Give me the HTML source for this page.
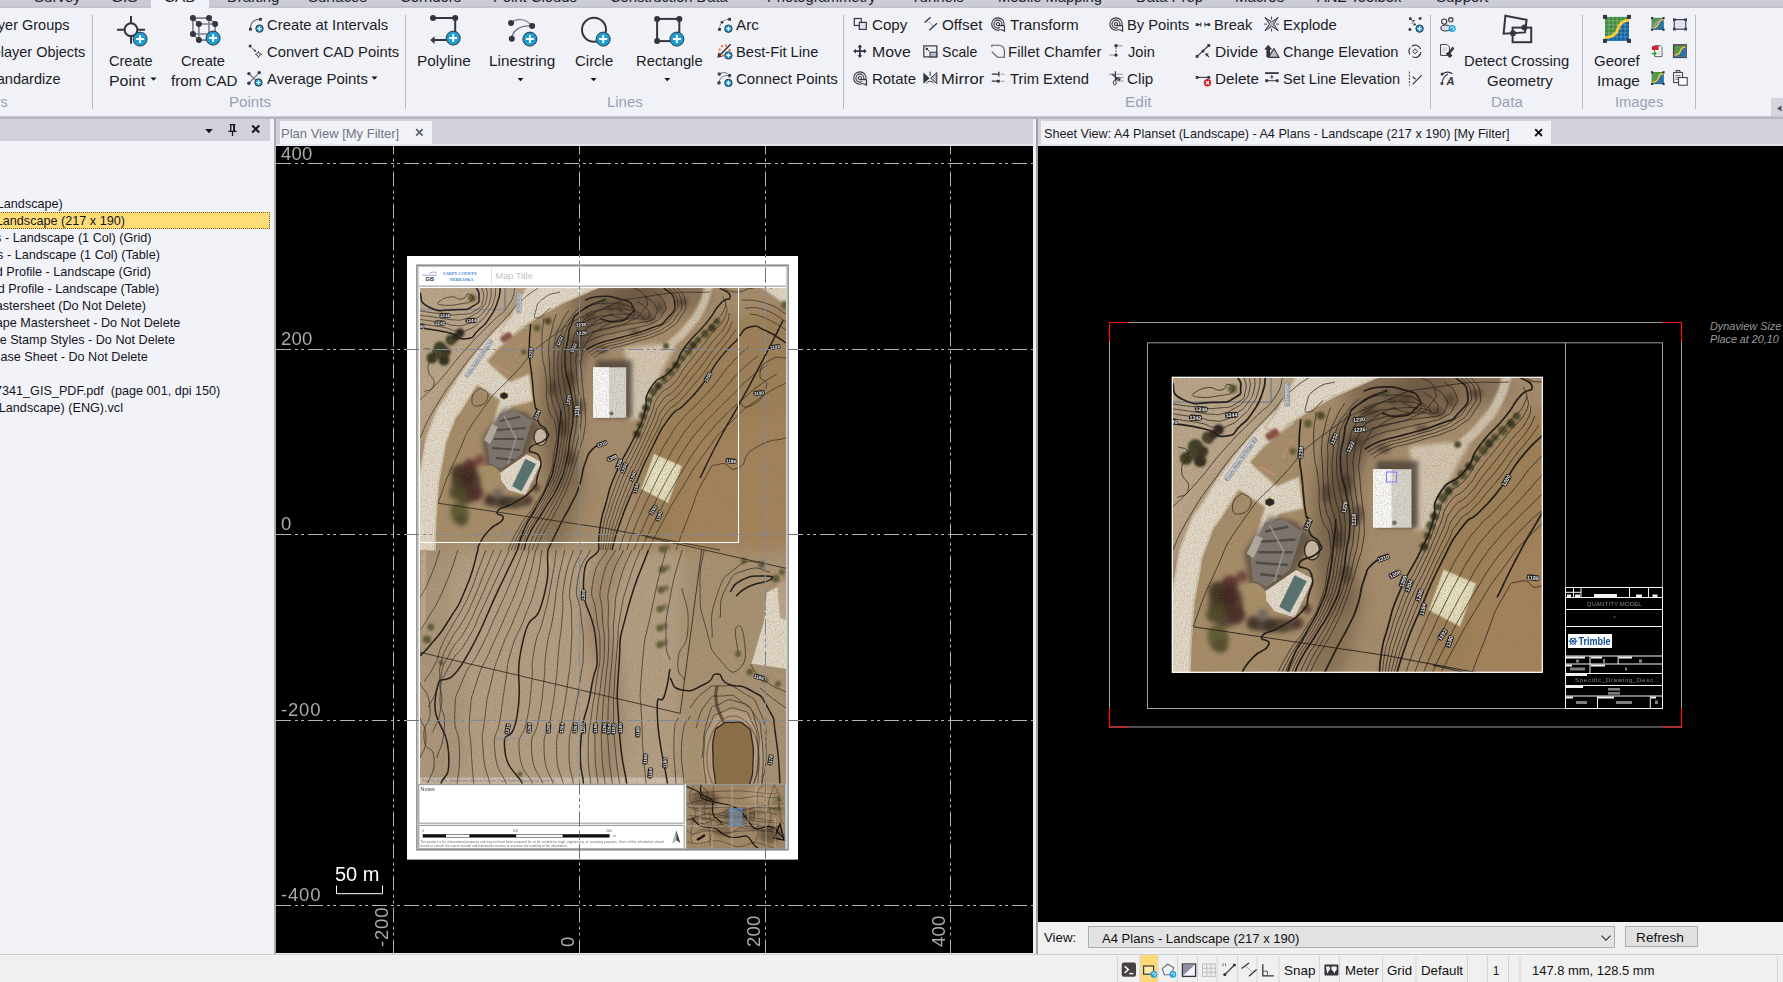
<!DOCTYPE html>
<html><head><meta charset="utf-8"><title>TBC</title>
<style>
html,body{margin:0;padding:0;}
body{width:1783px;height:982px;overflow:hidden;position:relative;background:#f0f0f0;font-family:"Liberation Sans",sans-serif;}
.a{position:absolute;}
.t{position:absolute;white-space:pre;font-family:"Liberation Sans",sans-serif;}
svg{position:absolute;overflow:visible;}
.sep{position:absolute;top:15px;width:1px;height:94px;background:#b9bac4;}
.sd{position:absolute;top:956px;width:1px;height:26px;background:#dcdcdc;}
</style></head><body>
<!-- top tab strip -->
<div class="a" style="left:0;top:0;width:1783px;height:8px;background:#cbccd5;"></div>
<div class="a" style="left:0;top:6px;width:1783px;height:2px;background:#c2c3cc;"></div>
<div class="a" style="left:151px;top:0;width:58px;height:8px;background:#f1f2f8;"></div>
<!-- ribbon -->
<div class="a" style="left:0;top:8px;width:1783px;height:108px;background:#f1f2f8;"></div>
<div class="a" style="left:0;top:116px;width:1783px;height:1px;background:#c9cad2;"></div>
<div class="a" style="left:0;top:117px;width:1783px;height:2px;background:#b4b5bd;"></div>
<div class="sep" style="left:92px;"></div>
<div class="sep" style="left:405px;"></div>
<div class="sep" style="left:843px;"></div>
<div class="sep" style="left:1430px;"></div>
<div class="sep" style="left:1582px;"></div>
<div class="sep" style="left:1695px;"></div>
<div class="a" style="left:1771px;top:98px;width:12px;height:18px;background:#d3d4dc;"></div>
<!-- dock strip -->
<div class="a" style="left:0;top:119px;width:1783px;height:27px;background:#d0d1db;"></div>
<!-- left panel -->
<div class="a" style="left:0;top:141px;width:274px;height:813px;background:#f2f3f9;"></div>
<div class="a" style="left:270px;top:119px;width:4px;height:835px;background:#f2f3f9;"></div>
<div class="a" style="left:274px;top:119px;width:2px;height:835px;background:#a9aab2;"></div>
<div class="a" style="left:0;top:954px;width:1783px;height:1px;background:#cfcfd2;"></div>
<!-- highlighted row -->
<div class="a" style="left:-2px;top:212px;width:270px;height:15px;background:#ffdc78;border:1px dotted #6b5a20;"></div>
<!-- plan view -->
<div class="a" style="left:280px;top:121px;width:152px;height:23.5px;background:#f2f3f9;"></div>
<div class="a" style="left:276px;top:144px;width:757px;height:2px;background:#e3e4ec;"></div>
<div class="a" style="left:276px;top:146px;width:757.5px;height:807px;background:#000;"></div>
<!-- splitter -->
<div class="a" style="left:1033px;top:119px;width:3px;height:835px;background:#eeeff5;"></div>
<div class="a" style="left:1036px;top:119px;width:2px;height:835px;background:#9fa0a8;"></div>
<!-- sheet view -->
<div class="a" style="left:1041px;top:121px;width:510px;height:23.5px;background:#f2f3f9;"></div>
<div class="a" style="left:1038px;top:144px;width:745px;height:2px;background:#e3e4ec;"></div>
<div class="a" style="left:1038px;top:146px;width:745px;height:776px;background:#000;"></div>
<div class="a" style="left:1038px;top:922px;width:745px;height:32px;background:#f0f0f0;"></div>
<div class="a" style="left:1088px;top:926px;width:527px;height:22px;background:#e3e3e3;border:1px solid #adadad;box-sizing:border-box;"></div>
<div class="a" style="left:1625px;top:926px;width:73px;height:21px;background:#e1e1e1;border:1px solid #adadad;box-sizing:border-box;"></div>
<!-- status bar -->
<div class="a" style="left:0;top:955px;width:1783px;height:27px;background:#f0f0f0;"></div>
<div class="a" style="left:1140px;top:955px;width:18px;height:27px;background:#ffd978;"></div>
<span class="t" style="left:-18.3px;top:15.8px;font-size:14.5px;line-height:19px;color:#1c1c26;transform-origin:0 0;transform:scaleX(1.0000);">Layer Groups</span>
<span class="t" style="left:-17.8px;top:42.7px;font-size:14.5px;line-height:19px;color:#1c1c26;transform-origin:0 0;transform:scaleX(1.0000);">Relayer Objects</span>
<span class="t" style="left:-16.9px;top:69.6px;font-size:14.5px;line-height:19px;color:#1c1c26;transform-origin:0 0;transform:scaleX(1.0000);">Standardize</span>
<span class="t" style="left:-34.6px;top:93.2px;font-size:14.5px;line-height:19px;color:#9a9fb4;transform-origin:0 0;transform:scaleX(0.9800);">Layers</span>
<span class="t" style="left:109.4px;top:51.8px;font-size:14.5px;line-height:19px;color:#1c1c26;transform-origin:0 0;transform:scaleX(1.0042);">Create</span>
<span class="t" style="left:109.3px;top:71.6px;font-size:14.5px;line-height:19px;color:#1c1c26;transform-origin:0 0;transform:scaleX(1.0968);">Point</span>
<span class="t" style="left:181.3px;top:51.8px;font-size:14.5px;line-height:19px;color:#1c1c26;transform-origin:0 0;transform:scaleX(1.0113);">Create</span>
<span class="t" style="left:170.7px;top:71.6px;font-size:14.5px;line-height:19px;color:#1c1c26;transform-origin:0 0;transform:scaleX(1.0444);">from CAD</span>
<span class="t" style="left:266.5px;top:15.8px;font-size:14.5px;line-height:19px;color:#1c1c26;transform-origin:0 0;transform:scaleX(1.0225);">Create at Intervals</span>
<span class="t" style="left:266.5px;top:42.7px;font-size:14.5px;line-height:19px;color:#1c1c26;transform-origin:0 0;transform:scaleX(1.0184);">Convert CAD Points</span>
<span class="t" style="left:266.5px;top:69.6px;font-size:14.5px;line-height:19px;color:#1c1c26;transform-origin:0 0;transform:scaleX(1.0293);">Average Points</span>
<span class="t" style="left:228.8px;top:93.2px;font-size:14.5px;line-height:19px;color:#9a9fb4;transform-origin:0 0;transform:scaleX(1.0438);">Points</span>
<span class="t" style="left:417.2px;top:51.8px;font-size:14.5px;line-height:19px;color:#1c1c26;transform-origin:0 0;transform:scaleX(1.0613);">Polyline</span>
<span class="t" style="left:488.6px;top:51.8px;font-size:14.5px;line-height:19px;color:#1c1c26;transform-origin:0 0;transform:scaleX(1.0543);">Linestring</span>
<span class="t" style="left:575.0px;top:51.8px;font-size:14.5px;line-height:19px;color:#1c1c26;transform-origin:0 0;transform:scaleX(1.0321);">Circle</span>
<span class="t" style="left:635.5px;top:51.8px;font-size:14.5px;line-height:19px;color:#1c1c26;transform-origin:0 0;transform:scaleX(1.0205);">Rectangle</span>
<span class="t" style="left:735.5px;top:15.8px;font-size:14.5px;line-height:19px;color:#1c1c26;transform-origin:0 0;transform:scaleX(1.0518);">Arc</span>
<span class="t" style="left:735.5px;top:42.7px;font-size:14.5px;line-height:19px;color:#1c1c26;transform-origin:0 0;transform:scaleX(1.0113);">Best-Fit Line</span>
<span class="t" style="left:735.5px;top:69.6px;font-size:14.5px;line-height:19px;color:#1c1c26;transform-origin:0 0;transform:scaleX(1.0358);">Connect Points</span>
<span class="t" style="left:607.3px;top:93.2px;font-size:14.5px;line-height:19px;color:#9a9fb4;transform-origin:0 0;transform:scaleX(1.0282);">Lines</span>
<span class="t" style="left:871.6px;top:15.8px;font-size:14.5px;line-height:19px;color:#1c1c26;transform-origin:0 0;transform:scaleX(1.0448);">Copy</span>
<span class="t" style="left:871.6px;top:42.7px;font-size:14.5px;line-height:19px;color:#1c1c26;transform-origin:0 0;transform:scaleX(1.0927);">Move</span>
<span class="t" style="left:871.6px;top:69.6px;font-size:14.5px;line-height:19px;color:#1c1c26;transform-origin:0 0;transform:scaleX(1.0310);">Rotate</span>
<span class="t" style="left:941.6px;top:15.8px;font-size:14.5px;line-height:19px;color:#1c1c26;transform-origin:0 0;transform:scaleX(1.0511);">Offset</span>
<span class="t" style="left:941.7px;top:42.7px;font-size:14.5px;line-height:19px;color:#1c1c26;transform-origin:0 0;transform:scaleX(0.9718);">Scale</span>
<span class="t" style="left:940.5px;top:69.6px;font-size:14.5px;line-height:19px;color:#1c1c26;transform-origin:0 0;transform:scaleX(1.1420);">Mirror</span>
<span class="t" style="left:1009.6px;top:15.8px;font-size:14.5px;line-height:19px;color:#1c1c26;transform-origin:0 0;transform:scaleX(1.0465);">Transform</span>
<span class="t" style="left:1008.2px;top:42.7px;font-size:14.5px;line-height:19px;color:#1c1c26;transform-origin:0 0;transform:scaleX(1.0356);">Fillet Chamfer</span>
<span class="t" style="left:1009.6px;top:69.6px;font-size:14.5px;line-height:19px;color:#1c1c26;transform-origin:0 0;transform:scaleX(1.0181);">Trim Extend</span>
<span class="t" style="left:1127.4px;top:15.8px;font-size:14.5px;line-height:19px;color:#1c1c26;transform-origin:0 0;transform:scaleX(1.0158);">By Points</span>
<span class="t" style="left:1127.5px;top:42.7px;font-size:14.5px;line-height:19px;color:#1c1c26;transform-origin:0 0;transform:scaleX(1.0078);">Join</span>
<span class="t" style="left:1127.4px;top:69.6px;font-size:14.5px;line-height:19px;color:#1c1c26;transform-origin:0 0;transform:scaleX(1.0520);">Clip</span>
<span class="t" style="left:1213.5px;top:15.8px;font-size:14.5px;line-height:19px;color:#1c1c26;transform-origin:0 0;transform:scaleX(1.0115);">Break</span>
<span class="t" style="left:1214.8px;top:42.7px;font-size:14.5px;line-height:19px;color:#1c1c26;transform-origin:0 0;transform:scaleX(1.0698);">Divide</span>
<span class="t" style="left:1214.8px;top:69.6px;font-size:14.5px;line-height:19px;color:#1c1c26;transform-origin:0 0;transform:scaleX(1.0516);">Delete</span>
<span class="t" style="left:1283.1px;top:15.8px;font-size:14.5px;line-height:19px;color:#1c1c26;transform-origin:0 0;transform:scaleX(1.0275);">Explode</span>
<span class="t" style="left:1283.1px;top:42.7px;font-size:14.5px;line-height:19px;color:#1c1c26;transform-origin:0 0;transform:scaleX(1.0082);">Change Elevation</span>
<span class="t" style="left:1283.2px;top:69.6px;font-size:14.5px;line-height:19px;color:#1c1c26;transform-origin:0 0;transform:scaleX(1.0018);">Set Line Elevation</span>
<span class="t" style="left:1124.7px;top:93.2px;font-size:14.5px;line-height:19px;color:#9a9fb4;transform-origin:0 0;transform:scaleX(1.0645);">Edit</span>
<span class="t" style="left:1464.4px;top:51.8px;font-size:14.5px;line-height:19px;color:#1c1c26;transform-origin:0 0;transform:scaleX(1.0202);">Detect Crossing</span>
<span class="t" style="left:1486.6px;top:71.6px;font-size:14.5px;line-height:19px;color:#1c1c26;transform-origin:0 0;transform:scaleX(1.0345);">Geometry</span>
<span class="t" style="left:1490.9px;top:93.2px;font-size:14.5px;line-height:19px;color:#9a9fb4;transform-origin:0 0;transform:scaleX(1.0367);">Data</span>
<span class="t" style="left:1594.4px;top:51.8px;font-size:14.5px;line-height:19px;color:#1c1c26;transform-origin:0 0;transform:scaleX(1.0320);">Georef</span>
<span class="t" style="left:1597.1px;top:71.6px;font-size:14.5px;line-height:19px;color:#1c1c26;transform-origin:0 0;transform:scaleX(1.0645);">Image</span>
<span class="t" style="left:1614.8px;top:93.2px;font-size:14.5px;line-height:19px;color:#9a9fb4;transform-origin:0 0;transform:scaleX(1.0162);">Images</span>
<span class="t" style="left:33.5px;top:-11.9px;font-size:14.5px;line-height:19px;color:#23232d;transform-origin:0 0;transform:scaleX(1.0366);">Survey</span>
<span class="t" style="left:110.5px;top:-11.9px;font-size:14.5px;line-height:19px;color:#23232d;transform-origin:0 0;transform:scaleX(1.0682);">GIS</span>
<span class="t" style="left:163.7px;top:-11.9px;font-size:14.5px;line-height:19px;color:#23232d;transform-origin:0 0;transform:scaleX(1.0550);">CAD</span>
<span class="t" style="left:226.6px;top:-11.9px;font-size:14.5px;line-height:19px;color:#23232d;transform-origin:0 0;transform:scaleX(1.0324);">Drafting</span>
<span class="t" style="left:308.4px;top:-11.9px;font-size:14.5px;line-height:19px;color:#23232d;transform-origin:0 0;transform:scaleX(1.0287);">Surfaces</span>
<span class="t" style="left:400.2px;top:-11.9px;font-size:14.5px;line-height:19px;color:#23232d;transform-origin:0 0;transform:scaleX(1.0275);">Corridors</span>
<span class="t" style="left:492.9px;top:-11.9px;font-size:14.5px;line-height:19px;color:#23232d;transform-origin:0 0;transform:scaleX(1.0198);">Point Clouds</span>
<span class="t" style="left:610.0px;top:-11.9px;font-size:14.5px;line-height:19px;color:#23232d;transform-origin:0 0;transform:scaleX(1.0139);">Construction Data</span>
<span class="t" style="left:766.5px;top:-11.9px;font-size:14.5px;line-height:19px;color:#23232d;transform-origin:0 0;transform:scaleX(1.0151);">Photogrammetry</span>
<span class="t" style="left:910.5px;top:-11.9px;font-size:14.5px;line-height:19px;color:#23232d;transform-origin:0 0;transform:scaleX(1.0323);">Tunnels</span>
<span class="t" style="left:997.9px;top:-11.9px;font-size:14.5px;line-height:19px;color:#23232d;transform-origin:0 0;transform:scaleX(1.0158);">Mobile Mapping</span>
<span class="t" style="left:1136.4px;top:-11.9px;font-size:14.5px;line-height:19px;color:#23232d;transform-origin:0 0;transform:scaleX(1.0250);">Data Prep</span>
<span class="t" style="left:1235.3px;top:-11.9px;font-size:14.5px;line-height:19px;color:#23232d;transform-origin:0 0;transform:scaleX(1.0347);">Macros</span>
<span class="t" style="left:1316.7px;top:-11.9px;font-size:14.5px;line-height:19px;color:#23232d;transform-origin:0 0;transform:scaleX(1.0197);">ANZ Toolbox</span>
<span class="t" style="left:1435.6px;top:-11.9px;font-size:14.5px;line-height:19px;color:#23232d;transform-origin:0 0;transform:scaleX(1.0324);">Support</span>
<span class="t" style="left:-53.2px;top:194.8px;font-size:13.5px;line-height:18px;color:#14141c;transform-origin:0 0;transform:scaleX(0.9350);">Planset (Landscape)</span>
<span class="t" style="left:-46.9px;top:211.8px;font-size:13.5px;line-height:18px;color:#14141c;transform-origin:0 0;transform:scaleX(0.9350);">Plans - Landscape (217 x 190)</span>
<span class="t" style="left:-46.7px;top:228.8px;font-size:13.5px;line-height:18px;color:#14141c;transform-origin:0 0;transform:scaleX(0.9350);">Sections - Landscape (1 Col) (Grid)</span>
<span class="t" style="left:-44.9px;top:245.8px;font-size:13.5px;line-height:18px;color:#14141c;transform-origin:0 0;transform:scaleX(0.9350);">Sections - Landscape (1 Col) (Table)</span>
<span class="t" style="left:-46.9px;top:262.8px;font-size:13.5px;line-height:18px;color:#14141c;transform-origin:0 0;transform:scaleX(0.9350);">Plan and Profile - Landscape (Grid)</span>
<span class="t" style="left:-45.2px;top:279.8px;font-size:13.5px;line-height:18px;color:#14141c;transform-origin:0 0;transform:scaleX(0.9350);">Plan and Profile - Landscape (Table)</span>
<span class="t" style="left:-79.9px;top:296.8px;font-size:13.5px;line-height:18px;color:#14141c;transform-origin:0 0;transform:scaleX(0.9350);">Landscape Mastersheet (Do Not Delete)</span>
<span class="t" style="left:-45.3px;top:313.8px;font-size:13.5px;line-height:18px;color:#14141c;transform-origin:0 0;transform:scaleX(0.9350);">Landscape Mastersheet - Do Not Delete</span>
<span class="t" style="left:-20.0px;top:330.8px;font-size:13.5px;line-height:18px;color:#14141c;transform-origin:0 0;transform:scaleX(0.9350);">Date Stamp Styles - Do Not Delete</span>
<span class="t" style="left:-7.8px;top:347.8px;font-size:13.5px;line-height:18px;color:#14141c;transform-origin:0 0;transform:scaleX(0.9350);">Base Sheet - Do Not Delete</span>
<span class="t" style="left:-12.3px;top:381.8px;font-size:13.5px;line-height:18px;color:#14141c;transform-origin:0 0;transform:scaleX(0.9350);">17341_GIS_PDF.pdf  (page 001, dpi 150)</span>
<span class="t" style="left:-51.5px;top:398.8px;font-size:13.5px;line-height:18px;color:#14141c;transform-origin:0 0;transform:scaleX(0.9350);">Planset (Landscape) (ENG).vcl</span>
<span class="t" style="left:281.2px;top:124.8px;font-size:13px;line-height:17px;color:#707585;transform-origin:0 0;transform:scaleX(0.9999);">Plan View [My Filter]</span>
<span class="t" style="left:1043.6px;top:124.8px;font-size:13px;line-height:17px;color:#1a1a24;transform-origin:0 0;transform:scaleX(0.9721);">Sheet View: A4 Planset (Landscape) - A4 Plans - Landscape (217 x 190) [My Filter]</span>
<span class="t" style="left:1043.9px;top:928.9px;font-size:13.5px;line-height:18px;color:#111;transform-origin:0 0;transform:scaleX(0.9845);">View:</span>
<span class="t" style="left:1102.2px;top:929.5px;font-size:13.5px;line-height:18px;color:#111;transform-origin:0 0;transform:scaleX(0.9673);">A4 Plans - Landscape (217 x 190)</span>
<span class="t" style="left:1636.4px;top:928.5px;font-size:13.5px;line-height:18px;color:#111;transform-origin:0 0;transform:scaleX(1.0135);">Refresh</span>
<span class="t" style="left:1284.1px;top:961.5px;font-size:13.5px;line-height:18px;color:#111;transform-origin:0 0;transform:scaleX(0.9952);">Snap</span>
<span class="t" style="left:1344.7px;top:961.5px;font-size:13.5px;line-height:18px;color:#111;transform-origin:0 0;transform:scaleX(0.9812);">Meter</span>
<span class="t" style="left:1387.1px;top:961.5px;font-size:13.5px;line-height:18px;color:#111;transform-origin:0 0;transform:scaleX(0.9868);">Grid</span>
<span class="t" style="left:1421.1px;top:961.5px;font-size:13.5px;line-height:18px;color:#111;transform-origin:0 0;transform:scaleX(0.9833);">Default</span>
<span class="t" style="left:1493.3px;top:961.5px;font-size:13.5px;line-height:18px;color:#111;transform-origin:0 0;transform:scaleX(0.8302);">1</span>
<span class="t" style="left:1532.2px;top:961.5px;font-size:13.5px;line-height:18px;color:#111;transform-origin:0 0;transform:scaleX(0.9599);">147.8 mm, 128.5 mm</span>
<span class="t" style="left:1709.8px;top:319.5px;font-size:10px;line-height:13px;color:#9a9a9a;transform-origin:0 0;transform:scaleX(1.0876);font-style:italic;">Dynaview Size =</span>
<span class="t" style="left:1709.8px;top:332.5px;font-size:10px;line-height:13px;color:#9a9a9a;transform-origin:0 0;transform:scaleX(1.0743);font-style:italic;">Place at 20,10</span><svg style="left:0;top:0" width="1783" height="120" viewBox="0 0 1783 120">
<defs>
<g id="bB"><circle r="7" fill="#1b9ed6"/><path d="M-4 0H4M0 -4V4" stroke="#fff" stroke-width="2" fill="none"/></g>
<g id="bS"><circle r="3.7" fill="#1b9ed6"/><path d="M-2.1 0H2.1M0 -2.1V2.1" stroke="#fff" stroke-width="1.2" fill="none"/></g>
<path id="dd" d="M-3 -1.5H3L0 1.8Z" fill="#111"/>
<g id="rot"><circle r="6.2" fill="none" stroke="#35353f" stroke-width="1.1"/><circle r="4" fill="none" stroke="#35353f" stroke-width="1.1"/><circle r="1.6" fill="none" stroke="#35353f" stroke-width="1.1"/><path d="M1 1.5H7V7.3H3.6" fill="#f1f2f8" stroke="none"/><path d="M0.5 1.6H6.6M6.6 1.6V7L3.2 5.4" fill="none" stroke="#35353f" stroke-width="1.2"/></g>
<g id="geo"><rect x="-12" y="-12" width="24" height="24" fill="#0f62a1"/><path d="M-12 -12H12V-9C4 -8 2 -4 1 0C0 5 -5 8 -12 9Z" fill="#418c3c"/><path d="M-12 9C-5 8 0 5 1 0C2 -4 4 -8 12 -9" fill="none" stroke="#f5c21b" stroke-width="3"/><path d="M-8 -12V12M-4 -12V12M0 -12V12M4 -12V12M8 -12V12M-12 -8H12M-12 -4H12M-12 0H12M-12 4H12M-12 8H12" stroke="#fff" stroke-opacity=".35" stroke-width=".7"/></g>
</defs>
<g fill="none" stroke="#35353f">
<!-- Create Point -->
<circle cx="131" cy="29.7" r="6.4" stroke-width="2"/><path d="M131 16V23.3M131 36.1V43.8M117 29.7H124.6M137.4 29.7H145" stroke-width="2"/>
<use href="#bB" x="140.1" y="39.1"/>
<!-- Create from CAD -->
<g stroke="#7d7d90" stroke-width="1.6"><path d="M192.9 18.1H209V34H192.9ZM198.9 24H215.1V40.1H198.9ZM192.9 18.1L198.9 24M209 18.1L215.1 24M192.9 34L198.9 40.1M209 34L215.1 40.1"/></g>
<g fill="#35353f" stroke="none"><circle cx="192.9" cy="18.1" r="3"/><circle cx="209" cy="18.1" r="3"/><circle cx="198.9" cy="24" r="3"/><circle cx="215.1" cy="24" r="3"/><circle cx="192.9" cy="34" r="3"/><circle cx="198.9" cy="40.1" r="3"/></g>
<use href="#bB" x="213.1" y="38.1"/>
<!-- create at intervals -->
<path d="M250.4 29.2C250.4 23 254 19.3 260.5 19.3" stroke="#6b6b7c" stroke-width="1.1"/><rect x="249" y="27.8" width="2.8" height="2.8" fill="#35353f" stroke="none"/><rect x="259.1" y="17.9" width="2.8" height="2.8" fill="#35353f" stroke="none"/>
<use href="#bS" x="259.5" y="28.6"/>
<!-- convert cad points -->
<circle cx="250.1" cy="45.9" r="1.5" fill="#35353f" stroke="none"/><path d="M250.5 46.3L255.5 51.3" stroke-width="1" stroke-dasharray="1.5 1"/><path d="M253.2 50.8L256.3 52.1L255 49Z" fill="#35353f" stroke="none"/><path d="M258.5 51.2L259.4 53.5L261.7 54.4L259.4 55.3L258.5 57.6L257.6 55.3L255.3 54.4L257.6 53.5Z" stroke-width=".9"/>
<!-- average points -->
<path d="M248.9 73.6L257.5 82M259.3 72.6L248.9 83.2" stroke="#6b6b7c" stroke-width="1.2"/><g fill="#35353f" stroke="none"><circle cx="248.9" cy="73.6" r="1.7"/><circle cx="259.3" cy="72.6" r="1.7"/><circle cx="248.9" cy="83.2" r="1.7"/></g>
<use href="#bS" x="258.5" y="82.5"/>
<!-- Polyline -->
<path d="M433 18.1H455.2V40.1H433" stroke-width="2"/><path d="M430.2 40.1L434.6 36.3V43.9Z" fill="#35353f" stroke="none"/><circle cx="433" cy="18.1" r="3" fill="#35353f" stroke="none"/><circle cx="455.2" cy="18.1" r="3" fill="#35353f" stroke="none"/>
<use href="#bB" x="453.2" y="38.1"/>
<!-- Linestring -->
<path d="M511 22.9C517 17.5 526 18.5 532.1 26" stroke="#8b8b9e" stroke-width="1.4"/><path d="M511.8 38.8C512.5 31 519 25 532.1 26" stroke="#70708a" stroke-width="1.4"/><g fill="#35353f" stroke="none"><circle cx="511" cy="22.9" r="3"/><circle cx="532.1" cy="26" r="3"/><circle cx="511.8" cy="38.8" r="3"/></g>
<use href="#bB" x="529.9" y="39.1"/>
<!-- Circle -->
<circle cx="594" cy="29.7" r="12" stroke-width="2"/><use href="#bB" x="603.2" y="39.1"/>
<!-- Rectangle -->
<rect x="657.1" y="18.9" width="22.2" height="22.2" stroke-width="2"/><g fill="#35353f" stroke="none"><circle cx="657.1" cy="18.9" r="3"/><circle cx="679.3" cy="18.9" r="3"/><circle cx="657.1" cy="41.1" r="3"/></g>
<use href="#bB" x="676.9" y="39.1"/>
<!-- Arc -->
<path d="M719.5 29.4C719.5 23 723.5 19.3 729.6 19.3" stroke="#6b6b7c" stroke-width="1" stroke-dasharray="2 1.2"/><rect x="718.1" y="28" width="2.8" height="2.8" fill="#35353f" stroke="none"/><rect x="728.2" y="17.9" width="2.8" height="2.8" fill="#35353f" stroke="none"/><circle cx="722" cy="22.3" r="1.4" fill="#35353f" stroke="none"/>
<use href="#bS" x="728.4" y="28.7"/>
<!-- Best fit -->
<g fill="#f26a1b" stroke="none"><rect x="721" y="45.2" width="2" height="2"/><rect x="725" y="44.6" width="2" height="2"/><rect x="718.6" y="48.6" width="2" height="2"/><rect x="728.6" y="49" width="2" height="2"/><rect x="718.2" y="52.6" width="2" height="2"/><rect x="722" y="54.6" width="2" height="2"/><rect x="726.4" y="51.8" width="2" height="2"/></g>
<path d="M730.6 44.3L719 56" stroke-width="1.6"/><path d="M717.3 57.7L718.2 52.8L722.2 56.8Z" fill="#35353f" stroke="none"/>
<use href="#bS" x="728.4" y="55.4"/>
<!-- connect points -->
<path d="M719.3 74.1C723 71.5 727 72.3 729.6 75.6" stroke="#6b6b7c" stroke-width="1"/><path d="M719 82.9C719.5 77.5 723.5 75 729.6 75.6" stroke="#6b6b7c" stroke-width="1"/><g fill="#45454f" stroke="none"><circle cx="719.3" cy="74.1" r="1.8"/><circle cx="729.6" cy="75.6" r="1.8"/><circle cx="719" cy="82.9" r="1.8"/></g>
<use href="#bS" x="728.4" y="82.9"/>
<!-- Copy -->
<rect x="854.3" y="18.5" width="7" height="7" stroke-width="1.2"/><rect x="859.3" y="22.4" width="7" height="7" fill="#e0e1f6" stroke-width="1.2"/>
<!-- Move -->
<path d="M859.9 45.6V56.8M854.3 51.2H865.5" stroke-width="1.8"/><path d="M859.9 44.4L862.3 47.2H857.5ZM859.9 58L862.3 55.2H857.5ZM853.1 51.2L855.9 48.8V53.6ZM866.7 51.2L863.9 48.8V53.6Z" fill="#35353f" stroke="none"/>
<use href="#rot" x="859.9" y="78.1"/>
<!-- Offset -->
<path d="M924.6 22.5L930.6 17.3M929.4 30.2L937 23.2" stroke-width="1.3"/><path d="M927 20L933.6 26.4" stroke-width=".8" stroke-dasharray="1.5 1"/>
<!-- Scale -->
<rect x="923.8" y="45.9" width="13" height="11" stroke-width="1.2"/><rect x="930" y="52.2" width="6.8" height="4.7" fill="#b9b9cd" stroke-width="1"/><path d="M929.6 51.6L926.4 48.4" stroke-width="1"/><path d="M925.4 47.4L928.4 48.2L926.2 50.4Z" fill="#35353f" stroke="none"/>
<!-- Mirror -->
<path d="M923.4 72.6V83.8L929.6 78.2Z" fill="#35353f" stroke="none"/><path d="M936.8 72.6V83.8L930.6 78.2Z" fill="#b9b9cd" stroke-width="1"/><path d="M930.1 71.6V76" stroke-width="1"/><path d="M926.8 83.4C927.6 80.6 932.6 80.6 933.4 83.4" stroke-width="1" />
<!-- Transform -->
<use href="#rot" x="997.9" y="24.1"/>
<!-- Fillet chamfer -->
<path d="M991.8 47V45.2H999C1002 45.2 1004.4 47.6 1004.4 50.6V57.2H997.4L991.8 51.6" stroke-width="1.1" stroke="#55555f"/>
<!-- Trim extend -->
<path d="M991.8 74.2H999M998.9 71.8V76.6M991.8 81.2H998" stroke-width="1.3"/><path d="M1000.6 74.2H1004.6M1000.4 81.2H1004.6" stroke="#a0a0ae" stroke-width="1"/><rect x="997" y="79.8" width="2.8" height="2.8" fill="#35353f" stroke="none"/>
<!-- By points -->
<use href="#rot" x="1116" y="24.1"/>
<!-- Join -->
<path d="M1116 45.8H1122.8M1109.2 55.1H1116" stroke="#8c8c9c" stroke-width="1"/><path d="M1116 47.6V53.4" stroke-width="1" stroke-dasharray="1.4 1.2"/><circle cx="1116" cy="45.8" r="1.7" fill="#35353f" stroke="none"/><circle cx="1116" cy="55.1" r="1.7" fill="#35353f" stroke="none"/>
<!-- Clip -->
<path d="M1108.6 74.2H1123.2M1118 77.6H1123.4M1118 81H1123.4" stroke="#8c8c9c" stroke-width=".9"/><path d="M1115.4 71.2V80.6M1111.6 74L1120 80.2" stroke-width="1.2"/><ellipse cx="1114.8" cy="82.6" rx="1.5" ry="2.2" stroke-width="1"/><ellipse cx="1118.2" cy="79" rx="2" ry="1.3" stroke-width="1"/>
<!-- Break -->
<path d="M1197.1 24.6H1200.6M1205.2 24.6H1208.8M1200.8 22.6V26.6M1205 22.6V26.6" stroke-width="1.1"/><rect x="1195.7" y="23.2" width="2.8" height="2.8" fill="#35353f" stroke="none"/><rect x="1207.4" y="23.2" width="2.8" height="2.8" fill="#35353f" stroke="none"/>
<!-- Divide -->
<path d="M1197.1 56.4L1208.8 45.5" stroke-width="1.1"/><rect x="1195.7" y="55" width="2.8" height="2.8" fill="#35353f" stroke="none"/><rect x="1207.4" y="44.1" width="2.8" height="2.8" fill="#35353f" stroke="none"/><circle cx="1203" cy="50.9" r="1.5" fill="#35353f" stroke="none"/><path d="M1205.2 53L1209 53.8L1207.6 54.8L1209.4 56.8L1208.6 57.4L1206.8 55.6L1206 56.8Z" fill="#35353f" stroke="none"/>
<!-- Delete -->
<path d="M1197.1 77.4H1208.8" stroke-width="1.1"/><rect x="1195.7" y="76" width="2.8" height="2.8" fill="#35353f" stroke="none"/><rect x="1207.4" y="76" width="2.8" height="2.8" fill="#35353f" stroke="none"/><circle cx="1207.5" cy="82.7" r="3.7" fill="#c9212e" stroke="none"/><path d="M1205.9 81.1L1209.1 84.3M1209.1 81.1L1205.9 84.3" stroke="#fff" stroke-width="1.2"/>
<!-- Explode -->
<g transform="translate(1271.6 24.1)"><path d="M-6.6 -6.6L-0 -2.2L6.6 -6.6L2.2 0L6.6 6.6L0 2.2L-6.6 6.6L-2.2 0Z" fill="#b4b4c4" stroke-width="1"/><path d="M0 -7.4V-4.4M0 7.4V4.4M-7.4 0H-4.6M7.4 0H4.6" stroke-width="1"/></g>
<!-- Change elevation -->
<path d="M1268.2 44.8L1272.2 49.4H1270V57H1266.4V49.4H1264.2Z" fill="#35353f" stroke="none"/><path d="M1268.4 57.4L1274 48.6L1279 57.4Z" fill="#b9b9cd" stroke-width="1.1"/>
<!-- Set line elevation -->
<path d="M1265 73.1H1278.8" stroke-width="1.8"/><path d="M1266.6 80.7H1277.2" stroke-width="1"/><rect x="1265.2" y="79.3" width="2.8" height="2.8" fill="#35353f" stroke="none"/><rect x="1275.8" y="79.3" width="2.8" height="2.8" fill="#35353f" stroke="none"/><path d="M1271.9 79V76.2" stroke-width="1"/><path d="M1271.9 75L1273.6 77.2H1270.2Z" fill="#35353f" stroke="none"/>
<!-- col7 -->
<g fill="#35353f" stroke="none"><rect x="1409" y="17.4" width="2.6" height="2.6"/><rect x="1418.8" y="17.2" width="2.6" height="2.6"/><rect x="1408.6" y="28.2" width="2.6" height="2.6"/><circle cx="1414.6" cy="24.4" r="1.2"/></g><path d="M1411.4 20.6H1414.6L1411.8 23.6" stroke-width=".9"/>
<use href="#bS" x="1419.6" y="28.6"/>
<path d="M1412 46.2A5.6 5.6 0 0 1 1420.6 49M1420.8 53.4A5.6 5.6 0 0 1 1412.4 56.6M1410 54.4A5.6 5.6 0 0 1 1410.4 47.6M1418.4 56A5.6 5.6 0 0 0 1420.8 52" stroke-width="1.1"/><path d="M1412.6 51.3L1415.1 48.8L1417.6 51.3L1415.1 53.8Z" stroke-width="1"/>
<path d="M1409.4 71.6V85.6" stroke-width="1" stroke-dasharray="1.8 1.4"/><path d="M1412.6 84.4L1421.6 75.4M1412.6 76.6L1415.6 79.2" stroke-width="1.2"/>
<!-- Data small -->
<circle cx="1444.2" cy="21.6" r="2.6" stroke-width="1.1"/><circle cx="1450.8" cy="19.8" r="2.2" stroke-width="1.1"/><ellipse cx="1445.6" cy="28" rx="4.8" ry="3" fill="#dcdcf0" stroke-width="1.1"/><circle cx="1452.2" cy="28.6" r="3.5" fill="#1b9ed6" stroke="none"/><path d="M1450.6 28.6A1.7 1.7 0 1 1 1452.2 30.3" stroke="#fff" stroke-width="1"/>
<path d="M1440.6 44.6H1447L1449.4 47V55.4H1440.6Z" stroke-width="1" fill="#fff"/><path d="M1442.4 48H1447.4M1442.4 50H1447.4M1442.4 52H1445.4" stroke="#8c8c9c" stroke-width=".7"/><path d="M1452.6 46.6L1454.4 48.4L1450.6 53.2L1452.4 55.8L1449.6 58L1445.6 53.4L1448.8 51.4Z" fill="#35353f" stroke="none"/>
<path d="M1442.2 74.4C1445 71.6 1449.4 71.4 1452.4 73.8M1442 83.6C1442.4 79 1444.6 75.6 1448 74" stroke-width="1.1"/><rect x="1440.8" y="72.8" width="2.6" height="2.6" fill="#35353f" stroke="none"/><rect x="1440.6" y="82.2" width="2.6" height="2.6" fill="#35353f" stroke="none"/>
</g>
<text x="1446.4" y="85" font-family="Liberation Sans" font-weight="bold" font-style="italic" font-size="11" fill="#35353f">A</text>
<!-- Detect crossing -->
<g fill="none" stroke="#35353f" stroke-width="2"><path d="M1505.4 15.8L1526.6 19.8L1525 32.4L1503.6 33.8Z"/><rect x="1512.6" y="27.6" width="18.6" height="14.6"/></g>
<circle cx="1524.4" cy="27.6" r="3" fill="#35353f"/><circle cx="1513" cy="33.2" r="3" fill="#35353f"/>
<!-- Georef -->
<use href="#geo" x="1617" y="28.9"/>
<g fill="#35353f"><rect x="1603" y="14.9" width="4" height="4"/><rect x="1627" y="14.9" width="4" height="4"/><rect x="1603" y="38.9" width="4" height="4"/><rect x="1627" y="38.9" width="4" height="4"/></g>
<!-- small georefs -->
<g transform="translate(1657.8 23.9) scale(.5)"><use href="#geo"/></g>
<path d="M1653 28.6C1654.6 24 1657.6 20.4 1662 19.4" stroke="#9a9aa8" stroke-width="1.6" fill="none"/>
<g fill="#35353f"><rect x="1651" y="17" width="2.2" height="2.2"/><rect x="1662.4" y="17" width="2.2" height="2.2"/><rect x="1651" y="28.6" width="2.2" height="2.2"/><rect x="1662.4" y="28.6" width="2.2" height="2.2"/></g>
<rect x="1674.2" y="19.6" width="11.6" height="9.6" fill="#e0e1f6" stroke="#35353f" stroke-width="1.1"/>
<g fill="#35353f"><rect x="1673" y="18.4" width="2.6" height="2.6"/><rect x="1684.4" y="18.4" width="2.6" height="2.6"/><rect x="1673" y="27.8" width="2.6" height="2.6"/><rect x="1684.4" y="27.8" width="2.6" height="2.6"/></g>
<!-- pdf -->
<path d="M1654.6 45.6H1660L1662 47.6V56.6H1654.6Z" fill="#fff" stroke="#55555f" stroke-width=".9"/><rect x="1652" y="46" width="6.6" height="4" fill="#d9232e"/><path d="M1651.6 53.6H1655.4M1654 51.6L1656 53.6L1654 55.6" stroke="#3f9a3c" stroke-width="1.4" fill="none"/><path d="M1657.6 52H1660.4M1657.6 54H1660.4" stroke="#9a9aa8" stroke-width=".7"/>
<g transform="translate(1679.9 51) scale(.48)"><use href="#geo"/></g><rect x="1673.6" y="44.8" width="12.6" height="12.6" fill="none" stroke="#4a4a55" stroke-width="1.4"/>
<g transform="translate(1657.8 78.1) scale(.5)"><use href="#geo"/></g>
<g fill="#35353f"><rect x="1651" y="71.2" width="2.2" height="2.2"/><rect x="1662.4" y="71.2" width="2.2" height="2.2"/><rect x="1651" y="82.8" width="2.2" height="2.2"/><rect x="1662.4" y="82.8" width="2.2" height="2.2"/></g>
<!-- paste -->
<path d="M1673.6 72.4H1682.6V82.6H1673.6Z" fill="#f1f2f8" stroke="#35353f" stroke-width="1"/><path d="M1676.2 72.4V70.6H1680V72.4" fill="none" stroke="#35353f" stroke-width="1"/><path d="M1675.4 75.4H1680.6M1675.4 77.4H1680.6M1675.4 79.4H1678" stroke="#55555f" stroke-width=".8"/><rect x="1678.6" y="77.6" width="8.6" height="7.6" fill="#fff" stroke="#35353f" stroke-width="1"/>
<!-- dropdown arrows -->
<use href="#dd" x="153.5" y="79"/><use href="#dd" x="374.5" y="78"/><use href="#dd" x="520.5" y="79.5"/><use href="#dd" x="593.6" y="79.5"/><use href="#dd" x="667.3" y="79.5"/>
<path d="M1777 108.5L1781.5 105.5V111.5Z" fill="#555"/>
</svg>
<svg style="left:0;top:0" width="1783" height="982" viewBox="0 0 1783 982">
<!-- dock header icons -->
<path d="M205.2 129H212.8L209 133.2Z" fill="#16161c"/>
<path d="M229.6 124.6H235.4M230.8 124.6V131.2M234.3 124.6V131.2M228.4 131.4H236.6M232.5 131.4V136" stroke="#16161c" stroke-width="1.3" fill="none"/><rect x="233.2" y="125" width="1.4" height="6" fill="#16161c"/>
<path d="M252.2 125.5L259.2 132.5M259.2 125.5L252.2 132.5" stroke="#16161c" stroke-width="2.1"/>
<!-- tab close -->
<path d="M416.2 129.2L422.6 135.6M422.6 129.2L416.2 135.6" stroke="#5c5f6c" stroke-width="1.7"/>
<path d="M1535.2 129.2L1542 136M1542 129.2L1535.2 136" stroke="#111" stroke-width="1.9"/>
<!-- combo chevron -->
<path d="M1601.5 935.6L1606 940.2L1610.5 935.6" fill="none" stroke="#333" stroke-width="1.2"/>
<!-- status dividers -->
<g stroke="#d6d6d6" stroke-width="1"><path d="M1117.5 956V982M1140 956V982M1158 956V982M1177.6 956V982M1197.5 956V982M1217 956V982M1237.6 956V982M1257 956V982M1279 956V982M1319.5 956V982M1339.5 956V982M1382.6 956V982M1416 956V982M1467.5 956V982M1487.5 956V982M1508.5 956V982M1520 956V982M1777.5 956V982"/></g>
<!-- status icons -->
<rect x="1121.7" y="962.6" width="14.3" height="14.2" rx="2.2" fill="#474044"/><path d="M1124.6 966.2L1128.4 969.6L1124.6 973" fill="none" stroke="#fff" stroke-width="1.5"/><path d="M1129.2 973.6H1133.4" stroke="#fff" stroke-width="1.4"/>
<rect x="1143.6" y="966" width="10" height="8.2" fill="#ffe9a8" stroke="#3a3a44" stroke-width="1.2"/><circle cx="1153.8" cy="974.4" r="3.3" fill="#1b9ed6"/><path d="M1152.4 974.4A1.5 1.5 0 1 1 1153.8 975.9" stroke="#fff" stroke-width=".9" fill="none"/>
<path d="M1162.2 968.6L1167.6 964.2L1173.6 967.6L1171.8 974.8H1164.4Z" fill="#f4f4fb" stroke="#6a6a78" stroke-width="1.1"/><circle cx="1172.9" cy="974.4" r="3.3" fill="#1b9ed6"/><path d="M1171.5 974.4A1.5 1.5 0 1 1 1172.9 975.9" stroke="#fff" stroke-width=".9" fill="none"/>
<rect x="1182.4" y="964" width="13.2" height="12.4" fill="#f2f2f8" stroke="#35353f" stroke-width="1.3"/><path d="M1183 964.6H1195L1183 975.8Z" fill="#8d8da4"/>
<g stroke="#bdbdbd" stroke-width="1" fill="none"><rect x="1202.5" y="964" width="12.8" height="12.4"/><path d="M1206.8 964V976.4M1211 964V976.4M1202.5 968.2H1215.3M1202.5 972.3H1215.3"/></g>
<path d="M1224.8 974.6L1234.4 965" stroke="#35353f" stroke-width="1.2"/><circle cx="1224.8" cy="974.6" r="1.6" fill="#35353f"/><circle cx="1234.4" cy="965" r="1.6" fill="#35353f"/><path d="M1223 963.2V966.2M1225.6 963.2V966.2" stroke="#55555f" stroke-width=".8"/>
<path d="M1241.6 968.6L1249 963M1249 976.2L1256.6 969.4" stroke="#35353f" stroke-width="1.3"/><path d="M1245.6 966L1252.6 972.6" stroke="#9a9aa6" stroke-width=".9"/>
<path d="M1262.8 964.2V975.8H1273.8" stroke="#35353f" stroke-width="1.3" fill="none"/><path d="M1262.8 971.2H1267.4V975.8" stroke="#55555f" stroke-width=".9" fill="none"/>
<rect x="1324.4" y="964.6" width="14" height="10.8" rx="1" fill="#35353f"/><path d="M1326 966.6H1329.6L1330.2 969L1328.4 971.6L1327.4 973.8L1326.6 970.4ZM1331.6 966.4H1336.6L1336.8 969.4L1335.2 971.4L1334.4 973.6L1333 971L1331.4 969.6Z" fill="#f2f2f2"/>
</svg>
<svg style="left:0;top:0" width="1783" height="982" viewBox="0 0 1783 982">
<defs>
<filter id="bl1" x="-20%" y="-20%" width="140%" height="140%"><feGaussianBlur stdDeviation="0.8"/></filter>
<filter id="bl2" x="-30%" y="-30%" width="160%" height="160%"><feGaussianBlur stdDeviation="2"/></filter>
<filter id="bl6" x="-30%" y="-30%" width="160%" height="160%"><feGaussianBlur stdDeviation="7"/></filter>
<filter id="grain" x="0" y="0" width="100%" height="100%"><feTurbulence type="fractalNoise" baseFrequency="0.9" numOctaves="2" seed="3" result="n"/><feColorMatrix type="matrix" values="0 0 0 0 0.2  0 0 0 0 0.14  0 0 0 0 0.08  0.9 0.9 0 0 -0.75"/></filter>
<filter id="tone" x="0" y="0" width="100%" height="100%" color-interpolation-filters="sRGB"><feColorMatrix type="saturate" values="0.93"/><feComponentTransfer><feFuncR type="linear" slope="0.97" intercept="0.035"/><feFuncG type="linear" slope="0.97" intercept="0.035"/><feFuncB type="linear" slope="0.97" intercept="0.035"/></feComponentTransfer></filter>
<clipPath id="cpOv"><rect x="686.3" y="784.4" width="98.8" height="64"/></clipPath>
<clipPath id="cpPlan"><rect x="0" y="0" width="365.3" height="495.1"/></clipPath>
<clipPath id="cpSheet"><rect x="0" y="0" width="319" height="254.6"/></clipPath>
<clipPath id="cpPage"><rect x="407" y="256" width="391" height="603.6"/></clipPath>
<clipPath id="cpPhoto"><rect x="420" y="288" width="365.3" height="495.1"/></clipPath>
<clipPath id="cpCanvas"><rect x="276" y="146" width="757.5" height="807"/></clipPath>

<g id="aerial">
<rect x="0" y="0" width="366" height="495.5" fill="#a48965"/>
<g filter="url(#bl6)">
<path d="M-10.0 -10.0L120.0 -10.0L80.0 40.0L40.0 90.0L10.0 140.0L-10.0 170.0Z" fill="#b9a386"/>
<path d="M60.0 110.0L110.0 60.0L125.0 120.0L120.0 200.0L60.0 260.0L10.0 260.0L20.0 170.0Z" fill="#a68a62"/>
<path d="M235.0 -5.0C223.3 4.0 223.3 6.3 200.0 22.0C176.7 37.7 183.7 22.7 165.0 42.0C146.3 61.3 153.0 52.3 144.0 80.0C135.0 107.7 139.3 96.7 138.0 125.0C136.7 153.3 137.3 140.0 140.0 165.0C142.7 190.0 144.0 188.3 146.0 200.0" fill="none" stroke="#4d3a29" stroke-width="36" stroke-opacity=".52"/>
<path d="M176.0 44.0C168.0 52.7 162.0 48.0 152.0 70.0C142.0 92.0 146.7 86.7 146.0 110.0C145.3 133.3 148.7 130.0 150.0 140.0" fill="none" stroke="#3a2a1e" stroke-width="16" stroke-opacity=".5"/>
<path d="M146.0 190.0C144.0 201.7 147.0 201.0 140.0 225.0C133.0 249.0 130.0 249.7 125.0 262.0" fill="none" stroke="#6e573d" stroke-width="34" stroke-opacity=".55"/>
<path d="M150.0 0.0C166.7 3.3 166.7 7.3 200.0 10.0C233.3 12.7 221.7 13.0 250.0 8.0C278.3 3.0 273.3 -0.7 285.0 -5.0" fill="none" stroke="#5a4430" stroke-width="40" stroke-opacity=".45"/>
<path d="M300.0 30.0L376.0 20.0L376.0 130.0L330.0 140.0L260.0 260.0L215.0 262.0L225.0 150.0L255.0 90.0Z" fill="#9c7b50"/>
<path d="M276.0 150.0L376.0 120.0L376.0 262.0L250.0 262.0Z" fill="#a27f52"/>
<path d="M-10.0 262.0L376.0 262.0L376.0 505.0L-10.0 505.0Z" fill="#b39c7e"/>
<path d="M195.0 262.0C189.3 284.7 179.7 284.0 178.0 330.0C176.3 376.0 187.7 343.3 190.0 400.0C192.3 456.7 186.7 466.7 185.0 500.0" fill="none" stroke="#8f7656" stroke-width="26" stroke-opacity=".6"/>
<path d="M20.0 262.0C16.7 284.7 8.3 277.3 10.0 330.0C11.7 382.7 21.7 363.3 25.0 420.0C28.3 476.7 21.7 473.3 20.0 500.0" fill="none" stroke="#a08a6c" stroke-width="40" stroke-opacity=".5"/>
<path d="M262.0 262.0L376.0 262.0L376.0 505.0L255.0 505.0L258.0 420.0Z" fill="#a88f6c"/>
</g>
<path d="M100.0 34.0C94.7 38.7 97.3 34.0 84.0 48.0C70.7 62.0 75.7 55.3 60.0 76.0C44.3 96.7 49.9 89.3 37.0 110.0C24.1 130.7 29.7 116.3 21.4 138.0C13.1 159.7 16.8 149.3 12.0 175.0C7.2 200.7 9.3 186.0 7.0 215.0C4.7 244.0 5.7 246.3 5.0 262.0" fill="none" stroke="#cfc1a8" stroke-width="21.5"/>
<path d="M100.0 34.0C94.7 38.7 97.3 34.0 84.0 48.0C70.7 62.0 75.7 55.3 60.0 76.0C44.3 96.7 49.9 89.3 37.0 110.0C24.1 130.7 29.7 116.3 21.4 138.0C13.1 159.7 16.8 149.3 12.0 175.0C7.2 200.7 9.3 186.0 7.0 215.0C4.7 244.0 5.7 246.3 5.0 262.0" fill="none" stroke="#e3d9c7" stroke-width="18"/>
<path d="M106.5 -2.0L184.0 -2.0L172.4 2.8L140.4 16.9L123.6 26.7L101.1 40.8L92.0 50.0L78.0 44.0L89.4 29.5Z" fill="#cfc1a8"/>
<path d="M108.8 -2.0L180.0 -2.0L171.0 1.6L139.5 15.2L122.6 25.0L100.1 39.0L92.0 47.0L81.0 43.0L91.4 29.8Z" fill="#e3d9c7"/>
<path d="M5.0 262.0C4.3 274.7 4.0 274.0 3.0 300.0C2.0 326.0 2.3 326.7 2.0 340.0" fill="none" stroke="#c9b899" stroke-width="9" stroke-opacity=".6" filter="url(#bl2)"/>
<path d="M101.1 41.5L123.6 27.5L126.0 36.0L116.0 52.0L111.0 84.0L92.0 95.0L72.0 84.0L67.0 73.0L79.0 59.5Z" fill="#a58a62" filter="url(#bl1)"/>
<path d="M56.0 90.0L66.0 73.0L90.0 94.0L109.0 86.0L113.0 113.0L92.0 118.0L79.0 139.0L72.0 139.0L80.0 112.0L53.0 94.0Z" fill="#e1d7c5" filter="url(#bl1)"/>
<rect x="-6" y="-3" width="12" height="7" rx="2" transform="translate(86 49) rotate(-32)" fill="#8a4a3a" filter="url(#bl1)"/>
<rect x="-8" y="-1.2" width="16" height="2.4" transform="translate(82 81) rotate(28)" fill="#c58c78" opacity=".8"/>
<rect x="-5" y="-1.2" width="10" height="2.4" transform="translate(97 66) rotate(-60)" fill="#c58c78" opacity=".7"/>
<rect x="-5" y="-1.2" width="10" height="2.4" transform="translate(102 56) rotate(-45)" fill="#c08a78" opacity=".6"/>
<path d="M288.5 -4.0C288.2 -2.1 290.2 -6.5 287.7 1.8C285.2 10.1 287.2 8.6 280.9 20.8C274.6 33.0 278.2 27.1 268.7 38.4C259.2 49.7 263.8 45.2 252.5 54.7C241.2 64.2 240.7 62.8 234.8 66.9" fill="none" stroke="#cfc1a9" stroke-width="8" filter="url(#bl1)"/>
<path d="M204.0 60.0L236.0 56.0L256.0 58.0L246.0 75.0L234.0 100.0L227.0 128.0L209.0 133.0L207.0 80.0Z" fill="#d4c6ae" filter="url(#bl2)"/>
<path d="M340.0 -2.0L370.0 -2.0L370.0 20.0L356.0 10.0Z" fill="#e0d6c4" filter="url(#bl1)"/>
<g filter="url(#bl2)" fill="#2e2218" opacity=".55">
<ellipse cx="158" cy="56" rx="7" ry="4"/>
<ellipse cx="170" cy="30" rx="8" ry="4"/>
<ellipse cx="200" cy="18" rx="7" ry="4"/>
<ellipse cx="228" cy="30" rx="8" ry="5"/>
<ellipse cx="150" cy="92" rx="5" ry="9"/>
<ellipse cx="160" cy="118" rx="5" ry="8"/>
<ellipse cx="143" cy="140" rx="5" ry="9"/>
<ellipse cx="182" cy="62" rx="6" ry="4"/>
<ellipse cx="215" cy="44" rx="6" ry="3"/>
<ellipse cx="240" cy="20" rx="5" ry="6"/>
<ellipse cx="262" cy="14" rx="6" ry="4"/>
<ellipse cx="133" cy="100" rx="4" ry="8"/>
<ellipse cx="150" cy="170" rx="5" ry="8"/>
</g>
<rect x="176" y="72" width="36" height="58" fill="#3e332a" opacity=".75" filter="url(#bl2)"/>
<rect x="173" y="79.3" width="33.2" height="50.5" fill="#d9d5cd"/>
<rect x="173" y="79.3" width="16" height="50.5" fill="#fbfbfa"/>
<circle cx="191.5" cy="125.5" r="2" fill="#6b6b70"/>
<path d="M234.0 166.0L262.0 178.0L248.0 215.0L221.0 201.0Z" fill="#e4dcb4" stroke="#b8a982" stroke-width="1"/>
<path d="M238.0 172.0L256.0 180.0L246.0 204.0L228.0 196.0Z" fill="#ece6c4" opacity=".7"/>
<path d="M62.0 150.0L84.0 120.0L106.0 124.0L120.0 138.0L106.0 170.0L84.0 186.0L66.0 178.0Z" fill="#2e2620" opacity=".55" filter="url(#bl2)"/>
<path d="M67.0 154.3L80.2 125.1L96.1 122.5L112.0 133.1L101.4 166.2L81.6 180.8L69.6 175.5Z" fill="#77706a"/>
<path d="M80 133L100 129M76 142L106 140M74 151L104 151M72 160L100 162M76 170L94 172" stroke="#3f3a38" stroke-width="2.2" fill="none" opacity=".85"/>
<path d="M84 128L96 150L88 176" stroke="#a09890" stroke-width="1.6" fill="none" opacity=".8"/>
<path d="M64.0 152.0L72.0 136.0L78.0 139.0L70.0 156.0Z" fill="#b4aaa0"/>
<ellipse cx="120.5" cy="149" rx="6.5" ry="8.5" fill="#c9b9a0" stroke="#241c14" stroke-width="1.2"/>
<path d="M80.2 184.7L106.7 166.2L121.3 174.1L105.4 207.2L88.2 201.9L80.2 191.3Z" fill="#e3dacb"/>
<path d="M105.4 170.8L116.0 176.1L101.4 203.3L92.2 198.0Z" fill="#4d6f6c"/>
<ellipse cx="69" cy="190" rx="12" ry="12.5" fill="#a98d62"/>
<g filter="url(#bl2)">
<ellipse cx="46" cy="196" rx="15" ry="20" fill="#33241a" opacity=".75"/>
<ellipse cx="88" cy="214" rx="24" ry="6" fill="#2e2018" opacity=".7"/>
<ellipse cx="40" cy="226" rx="9" ry="11" fill="#3c3a1c" opacity=".7"/>
<circle cx="40" cy="185" r="9" fill="#3a2c1a" opacity=".9"/>
<circle cx="50" cy="178" r="7" fill="#4a2220" opacity=".9"/>
<circle cx="44" cy="198" r="9" fill="#3c3418" opacity=".9"/>
<circle cx="55" cy="205" r="8" fill="#45201c" opacity=".9"/>
<circle cx="36" cy="205" r="7" fill="#46421c" opacity=".9"/>
<circle cx="48" cy="190" r="8" fill="#3a1e1a" opacity=".9"/>
<circle cx="60" cy="172" r="5" fill="#6b3430" opacity=".9"/>
<circle cx="38" cy="222" r="8" fill="#585426" opacity=".9"/>
<circle cx="42" cy="232" r="6" fill="#4a4420" opacity=".9"/>
<circle cx="70" cy="212" r="6" fill="#3a2a20" opacity=".9"/>
<circle cx="84" cy="214" r="6" fill="#33261c" opacity=".9"/>
<circle cx="95" cy="216" r="5" fill="#4a3a22" opacity=".9"/>
<circle cx="108" cy="212" r="5" fill="#4e2a22" opacity=".9"/>
<circle cx="78" cy="205" r="5" fill="#6b6256" opacity=".9"/>
<circle cx="116" cy="200" r="4" fill="#4a2c22" opacity=".9"/>
</g>
<g filter="url(#bl1)">
<circle cx="52" cy="10" r="4" fill="#5d5a2a"/>
<circle cx="20" cy="60" r="6.5" fill="#34341a"/>
<circle cx="31" cy="52" r="5.5" fill="#3b391b"/>
<circle cx="12" cy="70" r="5.5" fill="#303018"/>
<circle cx="24" cy="72" r="5.5" fill="#272614"/>
<circle cx="40" cy="45" r="4.5" fill="#261f14"/>
<circle cx="26" cy="64" r="5" fill="#302e18"/>
<circle cx="17" cy="66" r="5" fill="#3a381b"/>
<circle cx="36" cy="49" r="4" fill="#2a2416"/>
<circle cx="117" cy="40" r="3.5" fill="#5a5528"/>
<circle cx="104" cy="64" r="3" fill="#5e5a2e"/>
<circle cx="128" cy="33" r="3.5" fill="#4a4020"/>
<circle cx="184" cy="14" r="4" fill="#50502a"/>
<circle cx="190" cy="20" r="3" fill="#3f3c20"/>
<circle cx="246" cy="58" r="3" fill="#4a4424"/>
<circle cx="365" cy="17" r="4" fill="#5a5a2c"/>
<circle cx="297" cy="33.6" r="3.2" fill="#3f4020"/>
<circle cx="292" cy="40" r="3.7" fill="#2e2c18"/>
<circle cx="285" cy="46" r="4.2" fill="#4c4a26"/>
<circle cx="278" cy="52" r="3.2" fill="#3f4020"/>
<circle cx="273" cy="57" r="3.7" fill="#2e2c18"/>
<circle cx="268" cy="63" r="4.2" fill="#4c4a26"/>
<circle cx="262" cy="70" r="3.2" fill="#3f4020"/>
<circle cx="256" cy="77" r="3.7" fill="#2e2c18"/>
<circle cx="250" cy="84" r="4.2" fill="#4c4a26"/>
<circle cx="244" cy="91" r="3.2" fill="#3f4020"/>
<circle cx="238" cy="98" r="3.7" fill="#2e2c18"/>
<circle cx="233" cy="104" r="4.2" fill="#4c4a26"/>
<circle cx="229" cy="112" r="3.2" fill="#3f4020"/>
<circle cx="226" cy="120" r="3.7" fill="#2e2c18"/>
<circle cx="223" cy="128" r="4.2" fill="#4c4a26"/>
<circle cx="220" cy="137" r="3.2" fill="#3f4020"/>
<circle cx="217" cy="146" r="3.7" fill="#2e2c18"/>
<circle cx="242.4" cy="261.2" r="3.6" fill="#5c5a2a"/><circle cx="247.4" cy="259.2" r="3" fill="#3a3020" opacity=".45"/>
<circle cx="242.4" cy="281.6" r="3.6" fill="#5c5a2a"/><circle cx="247.4" cy="279.6" r="3" fill="#3a3020" opacity=".45"/>
<circle cx="241.1" cy="301.9" r="3.6" fill="#5c5a2a"/><circle cx="246.1" cy="299.9" r="3" fill="#3a3020" opacity=".45"/>
<circle cx="239.8" cy="321" r="3.6" fill="#5c5a2a"/><circle cx="244.8" cy="319" r="3" fill="#3a3020" opacity=".45"/>
<circle cx="239.8" cy="340.1" r="3.6" fill="#5c5a2a"/><circle cx="244.8" cy="338.1" r="3" fill="#3a3020" opacity=".45"/>
<circle cx="239.8" cy="356.7" r="3.6" fill="#5c5a2a"/><circle cx="244.8" cy="354.7" r="3" fill="#3a3020" opacity=".45"/>
<circle cx="10.8" cy="338.9" r="3.5" fill="#56542a"/>
<circle cx="7" cy="351.6" r="4" fill="#56542a"/>
<circle cx="21" cy="374.5" r="2.5" fill="#56542a"/>
<circle cx="323.8" cy="272.7" r="3" fill="#56542a"/>
<circle cx="341.6" cy="276.5" r="3.5" fill="#56542a"/>
<circle cx="355.6" cy="290.5" r="4" fill="#56542a"/>
<circle cx="362" cy="284" r="3" fill="#56542a"/>
<circle cx="318" cy="366" r="3" fill="#56542a"/>
<circle cx="330" cy="384" r="3.5" fill="#56542a"/>
<circle cx="345" cy="392" r="3" fill="#56542a"/>
<circle cx="358" cy="396" r="3" fill="#56542a"/>
<circle cx="100" cy="486" r="2.5" fill="#56542a"/>
</g>
<path d="M346.7 304.5L366.0 294.3L366.0 380.8L331.5 375.8L344.2 332.5Z" fill="#e2d8c6"/>
<path d="M357.0 296.0L366.0 293.0L366.0 332.0L360.0 330.0Z" fill="#b9a284"/>
<ellipse cx="313" cy="468" rx="31" ry="46" fill="#bfa686" opacity=".75" filter="url(#bl2)"/>
<path d="M297.0 398.0C296.7 402.7 295.0 402.7 296.0 412.0C297.0 421.3 297.3 418.7 300.0 426.0C302.7 433.3 302.7 431.3 304.0 434.0" fill="none" stroke="#4a3020" stroke-width="3.2" opacity=".75"/>
<ellipse cx="313" cy="470" rx="26" ry="42" fill="none" stroke="#6a4630" stroke-width="1.6" opacity=".6"/>
<ellipse cx="313" cy="471" rx="23" ry="39.5" fill="none" stroke="#b08a78" stroke-width="1.4" opacity=".7"/>
<path d="M294.0 448.0C296.3 438.0 294.0 442.5 300.0 438.0C306.0 433.5 303.3 434.5 312.0 434.5C320.7 434.5 319.3 432.2 326.0 438.0C332.7 443.8 329.7 439.7 332.0 452.0C334.3 464.3 333.7 460.7 333.0 475.0C332.3 489.3 333.7 482.7 330.0 495.0C326.3 507.3 332.0 506.3 322.0 512.0C312.0 517.7 309.0 519.3 300.0 512.0C291.0 504.7 297.3 504.7 295.0 490.0C292.7 475.3 293.3 482.0 293.0 468.0C292.7 454.0 291.7 458.0 294.0 448.0Z" fill="#8a6b3f" stroke="#1e1812" stroke-width="1.3"/>
<rect x="0" y="489.5" width="265" height="6" fill="#fff" opacity=".35"/>
<g fill="none" stroke="#1a1612" stroke-width="0.9" opacity=".9">
<path d="M18 215.2L185.5 240.3L300 262M0 364.3L260.2 425.4L281.8 261.2M224.6 248.5L366 280.3M0 21.5H85V0" />
</g>
<path d="M0 21.5H85V0" fill="none" stroke="#8a8f98" stroke-width="1.4"/>
<g fill="none" stroke="#15110d" stroke-linejoin="round">
<g stroke-width="0.75" opacity=".85">
<path d="M0.0 23.0C6.7 23.8 6.7 24.3 20.0 25.5C33.3 26.7 28.0 27.7 40.0 26.5C52.0 25.3 48.3 26.8 56.0 22.0C63.7 17.2 61.0 19.3 63.0 12.0C65.0 4.7 62.3 4.0 62.0 0.0"/>
<path d="M0.0 27.2C3.7 27.7 3.7 27.7 11.0 28.7C18.3 29.7 14.6 29.2 21.9 30.3C29.2 31.3 25.6 31.4 32.8 31.8C40.0 32.1 36.6 32.9 43.4 31.3C50.2 29.7 47.3 30.6 53.3 27.0C59.4 23.4 57.2 25.9 61.6 20.6C66.0 15.2 64.9 17.8 66.5 11.0C68.2 4.1 66.5 3.7 66.5 0.0"/>
<path d="M0.0 31.4C4.0 32.0 4.0 32.0 11.9 33.2C19.8 34.4 15.9 33.6 23.7 35.0C31.6 36.4 27.8 37.1 35.4 37.5C42.9 37.9 39.4 38.6 46.5 36.2C53.5 33.8 50.4 34.9 56.5 30.3C62.7 25.7 60.3 28.5 64.8 22.4C69.4 16.2 68.1 19.3 70.2 11.9C72.3 4.4 70.8 4.0 71.1 0.0"/>
<path d="M0.0 35.6C4.3 36.3 4.3 36.3 12.8 37.7C21.3 39.1 17.2 37.9 25.6 39.8C33.9 41.6 30.0 42.8 37.9 43.2C45.9 43.7 42.2 44.3 49.5 41.1C56.8 37.9 53.6 39.3 59.8 33.7C66.0 28.0 63.4 31.2 68.1 24.2C72.8 17.3 71.4 20.8 73.9 12.8C76.4 4.7 75.1 4.3 75.7 0.0"/>
<path d="M18.0 14.0C22.0 12.3 22.0 10.0 30.0 9.0C38.0 8.0 36.0 12.0 42.0 11.0C48.0 10.0 44.7 5.7 48.0 6.0C51.3 6.3 54.7 8.7 52.0 12.0C49.3 15.3 50.0 14.3 40.0 16.0C30.0 17.7 29.3 17.7 22.0 17.0C14.7 16.3 19.3 15.0 18.0 14.0"/>
<path d="M0.0 112.0C6.7 105.3 5.0 108.7 20.0 92.0C35.0 75.3 28.3 80.7 45.0 62.0C61.7 43.3 55.7 50.7 70.0 36.0C84.3 21.3 79.7 30.0 88.0 18.0C96.3 6.0 92.7 6.0 95.0 0.0"/>
<path d="M0.0 150.0C5.0 140.0 2.3 141.3 15.0 120.0C27.7 98.7 22.3 107.3 38.0 86.0C53.7 64.7 46.7 74.0 62.0 56.0C77.3 38.0 71.3 46.0 84.0 32.0C96.7 18.0 88.7 24.7 100.0 14.0C111.3 3.3 112.0 4.7 118.0 0.0"/>
<path d="M5.0 60.0C8.0 62.0 13.0 59.3 14.0 66.0C15.0 72.7 8.0 70.0 8.0 80.0C8.0 90.0 15.3 88.0 14.0 96.0C12.7 104.0 7.3 101.3 4.0 104.0"/>
<path d="M60.0 100.0C62.7 102.7 68.7 102.0 68.0 108.0C67.3 114.0 63.3 117.3 58.0 118.0C52.7 118.7 51.3 116.0 52.0 110.0C52.7 104.0 57.3 103.3 60.0 100.0"/>
<path d="M290.0 4.0C270.0 5.3 266.7 2.0 230.0 8.0C193.3 14.0 213.3 8.0 180.0 22.0C146.7 36.0 158.3 29.0 130.0 50.0C101.7 71.0 118.3 60.0 95.0 85.0C71.7 110.0 79.7 96.7 60.0 125.0C40.3 153.3 50.0 140.0 36.0 170.0C22.0 200.0 24.0 200.0 18.0 215.0"/>
<path d="M136.3 26.2C134.8 31.5 134.2 31.1 131.8 42.0C129.3 52.8 129.6 47.2 128.8 58.7C128.1 70.1 129.0 64.5 129.5 76.4C130.1 88.2 129.6 82.3 130.5 94.3C131.3 106.3 129.8 100.5 132.0 112.2C134.3 123.9 135.1 117.8 137.3 129.4C139.5 141.0 138.8 135.2 138.6 147.1C138.3 158.9 138.5 153.1 136.6 165.0C134.7 176.8 136.2 171.2 132.9 182.6C129.5 194.1 131.5 188.5 126.5 199.4C121.6 210.2 124.3 205.0 118.1 215.3C111.9 225.5 114.5 220.1 108.1 230.2C101.6 240.4 104.5 235.1 98.9 245.7C93.3 256.3 93.8 256.6 91.2 262.0"/>
<path d="M148.6 22.4C146.0 27.1 145.2 26.5 140.7 36.4C136.1 46.4 137.2 41.1 135.0 52.4C132.8 63.7 134.4 58.3 134.1 70.4C133.8 82.6 133.5 76.6 134.2 88.9C134.9 101.1 133.9 95.2 136.1 107.2C138.3 119.3 138.9 113.1 140.8 125.1C142.8 137.1 142.3 131.1 142.0 143.3C141.7 155.5 141.8 149.5 139.8 161.7C137.9 173.9 139.6 168.1 136.3 179.9C133.0 191.7 135.0 186.0 130.0 197.2C125.1 208.5 127.7 203.0 121.5 213.6C115.3 224.3 117.9 218.7 111.4 229.2C104.9 239.7 107.6 234.2 101.9 245.1C96.3 256.0 96.9 256.4 94.4 262.0"/>
<path d="M160.9 18.7C157.1 22.7 156.2 21.8 149.6 30.9C143.0 40.1 144.9 34.9 141.2 46.1C137.5 57.3 139.7 52.0 138.6 64.5C137.6 76.9 137.4 70.8 138.0 83.4C138.5 96.0 138.1 89.8 140.2 102.2C142.3 114.7 142.6 108.3 144.4 120.7C146.1 133.2 145.9 127.0 145.5 139.5C145.0 152.1 145.0 145.9 143.1 158.4C141.2 171.0 142.9 165.0 139.7 177.2C136.5 189.4 138.4 183.5 133.5 195.1C128.6 206.7 131.1 201.0 124.9 212.0C118.7 223.0 121.4 217.3 114.8 228.2C108.1 239.0 110.7 233.2 105.0 244.5C99.2 255.8 100.1 256.2 97.6 262.0"/>
<path d="M173.2 14.9C168.3 18.4 167.1 17.1 158.5 25.4C149.9 33.7 152.5 28.8 147.4 39.8C142.3 50.9 145.1 45.8 143.2 58.5C141.3 71.2 141.4 65.1 141.7 78.0C142.1 90.9 142.2 84.4 144.3 97.3C146.4 110.1 146.4 103.6 147.9 116.4C149.5 129.2 149.4 122.9 148.9 135.8C148.4 148.7 148.3 142.3 146.4 155.2C144.5 168.1 146.3 161.9 143.1 174.5C140.0 187.1 141.9 181.0 137.0 193.0C132.1 205.0 134.6 199.0 128.3 210.4C122.0 221.8 124.9 216.0 118.1 227.1C111.4 238.3 113.8 232.2 108.0 243.9C102.2 255.5 103.2 256.0 100.8 262.0"/>
<path d="M124.0 30.0C123.3 40.0 121.3 40.0 122.0 60.0C122.7 80.0 124.0 70.7 126.0 90.0C128.0 109.3 124.7 101.3 128.0 118.0C131.3 134.7 134.0 124.3 136.0 140.0C138.0 155.7 136.7 147.7 134.0 165.0C131.3 182.3 134.0 175.3 128.0 192.0C122.0 208.7 125.3 199.7 116.0 215.0C106.7 230.3 109.3 222.3 100.0 238.0C90.7 253.7 92.0 254.0 88.0 262.0"/>
<path d="M189.1 18.3C183.3 21.2 181.9 19.6 171.6 26.8C161.2 34.1 164.6 29.5 158.2 40.0C151.8 50.6 154.8 45.8 152.3 58.5C149.9 71.1 150.6 65.0 150.9 77.9C151.3 90.8 151.7 84.3 153.4 97.1C155.1 110.0 155.1 103.5 156.1 116.4C157.1 129.3 157.4 123.0 156.3 135.8C155.3 148.7 155.4 142.2 153.0 155.0C150.6 167.7 152.4 161.5 149.1 174.1C145.9 186.6 147.9 180.6 143.2 192.6C138.4 204.7 140.9 198.7 134.9 210.2C128.9 221.7 131.7 215.9 125.2 227.1C118.6 238.4 120.9 232.3 115.2 243.9C109.5 255.5 110.4 256.0 108.0 262.0"/>
<path d="M192.8 25.5C187.1 28.3 185.6 26.8 175.7 33.8C165.7 40.8 169.1 36.3 162.8 46.5C156.6 56.7 159.1 52.1 156.9 64.3C154.8 76.6 155.9 70.7 156.4 83.2C156.9 95.8 157.0 89.5 158.5 102.0C159.9 114.5 160.1 108.2 160.7 120.8C161.3 133.3 161.8 127.2 160.3 139.6C158.8 152.1 159.1 145.8 156.3 158.0C153.4 170.3 155.2 164.3 151.8 176.4C148.3 188.5 150.4 182.6 145.8 194.4C141.3 206.1 143.7 200.3 138.0 211.6C132.4 222.9 135.1 217.2 128.9 228.2C122.7 239.2 125.0 233.3 119.3 244.6C113.7 255.8 114.4 256.2 112.0 262.0"/>
<path d="M196.4 32.8C190.8 35.4 189.4 34.0 179.8 40.8C170.2 47.5 173.6 43.1 167.5 52.9C161.4 62.8 163.4 58.3 161.5 70.2C159.6 82.1 161.1 76.4 161.8 88.6C162.5 100.8 162.3 94.7 163.5 106.8C164.7 119.0 165.1 112.9 165.3 125.1C165.6 137.3 166.2 131.5 164.3 143.4C162.4 155.4 162.9 149.4 159.6 161.1C156.3 172.9 158.1 167.0 154.4 178.7C150.7 190.4 152.9 184.7 148.5 196.1C144.1 207.6 146.5 202.0 141.2 213.0C135.9 224.0 138.5 218.5 132.6 229.2C126.7 240.0 129.0 234.3 123.5 245.2C117.9 256.1 118.5 256.4 116.0 262.0"/>
<path d="M130.0 20.0C126.0 23.3 122.7 29.3 118.0 30.0C113.3 30.7 114.0 28.7 116.0 22.0C118.0 15.3 116.0 16.0 124.0 10.0C132.0 4.0 134.7 6.0 140.0 4.0"/>
<path d="M189.6 26.5C193.2 27.6 194.0 28.7 200.4 29.8C206.9 31.0 204.2 31.4 208.8 30.0C213.5 28.7 213.8 29.4 214.4 25.9C215.0 22.3 215.5 22.6 210.6 19.3C205.8 16.0 207.3 17.3 199.8 15.9C192.4 14.6 195.9 15.2 188.2 15.3C180.4 15.3 184.2 14.7 176.5 16.0C168.9 17.3 168.9 18.1 165.1 19.1"/>
<path d="M198.6 22.1C202.2 23.7 203.6 24.5 209.3 26.9C214.9 29.3 212.5 29.2 215.5 29.4C218.5 29.6 219.2 29.6 218.3 27.5C217.4 25.5 218.5 25.3 212.9 23.1C207.2 21.0 209.3 21.7 201.4 21.1C193.6 20.4 197.4 20.7 189.2 21.2C181.1 21.7 185.1 20.8 177.1 22.5C169.1 24.2 169.2 25.0 165.3 26.3"/>
<path d="M207.7 17.7C211.2 19.8 213.3 20.3 218.1 24.0C222.9 27.6 220.8 26.9 222.2 28.7C223.6 30.4 224.6 29.8 222.3 29.2C219.9 28.6 221.5 28.0 215.1 27.0C208.7 26.0 211.3 26.1 203.0 26.2C194.8 26.3 198.8 26.2 190.3 27.2C181.8 28.1 185.9 27.0 177.6 29.0C169.3 31.1 169.5 32.0 165.4 33.4"/>
<path d="M216.8 13.2C220.2 15.8 222.9 16.1 226.9 21.0C231.0 25.9 229.1 24.7 228.9 28.0C228.7 31.3 230.1 30.0 226.2 30.9C222.4 31.8 224.6 30.6 217.4 30.8C210.2 30.9 213.3 30.6 204.6 31.3C196.0 32.1 200.2 31.7 191.4 33.1C182.6 34.6 186.8 33.1 178.2 35.6C169.6 38.0 169.8 38.9 165.6 40.6"/>
<path d="M225.9 8.8C229.2 11.9 232.5 11.9 235.8 18.1C239.0 24.2 237.4 22.5 235.6 27.3C233.7 32.2 235.5 30.2 230.2 32.6C224.9 35.0 227.6 33.3 219.6 34.6C211.6 35.9 215.3 35.0 206.2 36.5C197.2 38.0 201.6 37.2 192.5 39.1C183.3 41.0 187.6 39.2 178.7 42.1C169.8 45.0 170.0 45.8 165.7 47.7"/>
<path d="M234.9 4.4C238.2 8.0 242.1 7.7 244.6 15.1C247.0 22.5 245.8 20.3 242.3 26.6C238.8 33.0 240.9 30.3 234.1 34.3C227.3 38.2 230.7 36.0 221.9 38.4C213.1 40.9 217.3 39.4 207.8 41.6C198.4 43.8 203.1 42.7 193.5 45.1C184.0 47.4 188.5 45.4 179.3 48.6C170.0 51.9 170.3 52.8 165.9 54.9"/>
<path d="M248.5 0.0C251.5 4.3 256.0 3.8 257.4 12.9C258.9 21.9 258.0 18.9 252.8 27.1C247.6 35.2 250.2 31.7 241.9 37.4C233.5 43.1 237.5 40.3 227.8 44.1C218.0 47.9 222.8 45.7 212.7 48.7C202.7 51.7 207.7 50.3 197.6 53.1C187.6 56.0 192.2 53.5 182.5 57.3C172.8 61.1 173.2 62.1 168.5 64.5"/>
<path d="M253.0 0.0C255.8 4.5 260.2 4.2 261.4 13.6C262.6 22.9 261.9 19.7 256.6 28.2C251.3 36.6 254.0 33.0 245.6 38.9C237.2 44.8 241.2 42.0 231.4 46.0C221.5 49.9 226.3 47.6 216.0 50.7C205.8 53.8 210.9 52.3 200.6 55.2C190.4 58.2 195.1 55.6 185.2 59.5C175.3 63.4 175.7 64.5 171.0 67.0"/>
<path d="M257.5 0.0C260.2 4.7 264.5 4.5 265.5 14.2C266.4 24.0 265.8 20.6 260.4 29.3C255.1 38.0 257.9 34.2 249.4 40.4C240.9 46.6 245.0 43.7 235.0 47.8C224.9 51.9 229.8 49.5 219.3 52.7C208.9 55.9 214.1 54.4 203.6 57.4C193.2 60.3 197.9 57.6 187.9 61.7C177.8 65.7 178.3 66.9 173.5 69.5"/>
<path d="M214.0 0.0C218.0 3.3 223.3 2.0 226.0 10.0C228.7 18.0 228.0 16.0 222.0 24.0C216.0 32.0 218.7 28.7 208.0 34.0C197.3 39.3 202.0 36.7 190.0 40.0C178.0 43.3 178.0 42.7 172.0 44.0"/>
<path d="M302.9 8.3C303.3 12.8 308.1 11.9 304.0 21.8C299.9 31.8 299.5 27.2 290.6 38.2C281.7 49.1 286.0 43.6 277.1 54.6C268.3 65.6 272.3 59.8 263.9 71.2C255.6 82.6 261.4 78.2 252.1 88.8C242.9 99.3 244.0 91.7 236.2 102.9C228.4 114.0 233.7 109.2 228.6 122.2C223.6 135.3 226.6 129.0 221.1 142.0C215.7 155.1 218.4 148.6 212.2 161.3C206.1 174.1 208.5 167.4 202.6 180.3C196.8 193.2 199.6 186.7 194.7 200.0C189.8 213.3 192.0 206.6 188.1 220.2C184.1 233.9 185.2 226.9 182.8 240.9C180.5 254.8 181.6 255.0 181.0 262.0"/>
<path d="M306.1 16.7C305.6 21.1 309.4 20.3 304.5 30.1C299.7 39.8 300.1 35.3 291.6 45.9C283.0 56.6 287.4 51.4 278.8 62.1C270.3 72.8 274.2 67.2 266.0 78.1C257.7 89.0 263.2 84.6 254.1 94.8C245.0 104.9 246.5 97.7 238.7 108.5C231.0 119.2 236.1 114.5 230.9 127.0C225.7 139.6 228.6 133.5 223.1 146.0C217.7 158.6 220.4 152.3 214.5 164.7C208.6 177.1 211.0 170.7 205.4 183.2C199.8 195.7 202.4 189.4 197.7 202.3C192.9 215.1 195.0 208.6 191.0 221.8C187.0 234.9 188.3 228.2 185.7 241.7C183.1 255.1 184.0 255.2 183.2 262.0"/>
<path d="M309.4 25.0C307.9 29.4 310.7 28.8 305.1 38.3C299.5 47.9 300.7 43.3 292.6 53.7C284.4 64.1 288.7 59.1 280.5 69.5C272.3 79.9 276.1 74.6 268.0 85.0C259.8 95.4 265.0 91.0 256.0 100.7C247.1 110.4 248.9 103.7 241.2 114.1C233.6 124.4 238.5 119.9 233.1 131.9C227.8 143.9 230.5 137.9 225.1 150.0C219.7 162.1 222.5 156.1 216.8 168.1C211.2 180.2 213.5 174.0 208.1 186.1C202.7 198.2 205.3 192.1 200.6 204.5C195.9 216.9 198.0 210.7 194.0 223.3C190.0 235.9 191.4 229.5 188.5 242.4C185.7 255.3 186.4 255.5 185.4 262.0"/>
<path d="M312.6 33.3C310.3 37.7 312.0 37.2 305.6 46.6C299.3 55.9 301.3 51.3 293.5 61.4C285.7 71.6 290.0 66.8 282.2 77.0C274.4 87.1 278.1 81.9 270.0 91.8C261.9 101.8 266.7 97.4 258.0 106.7C249.2 116.0 251.3 109.7 243.8 119.7C236.2 129.7 240.9 125.3 235.4 136.7C229.8 148.2 232.5 142.4 227.1 154.0C221.7 165.6 224.5 159.9 219.1 171.5C213.7 183.2 216.1 177.2 210.9 189.0C205.7 200.7 208.2 194.8 203.6 206.8C198.9 218.7 201.0 212.7 196.9 224.8C192.9 237.0 194.5 230.8 191.4 243.2C188.3 255.6 188.9 255.7 187.6 262.0"/>
<path d="M315.8 41.7C312.6 46.1 313.3 45.7 306.2 54.8C299.1 64.0 301.9 59.3 294.5 69.2C287.1 79.0 291.4 74.6 283.9 84.4C276.4 94.3 280.0 89.3 272.0 98.7C264.1 108.1 268.5 103.8 259.9 112.7C251.3 121.6 253.7 115.6 246.3 125.3C238.8 134.9 243.3 130.6 237.6 141.6C231.9 152.5 234.5 146.9 229.1 158.0C223.7 169.1 226.6 163.7 221.4 174.9C216.3 186.2 218.6 180.5 213.6 191.8C208.7 203.2 211.1 197.5 206.5 209.0C202.0 220.5 204.0 214.7 199.9 226.3C195.8 238.0 197.6 232.1 194.2 244.0C190.9 255.9 191.3 256.0 189.8 262.0"/>
<path d="M328.4 59.0C322.6 64.6 321.7 63.9 310.9 75.9C300.0 87.8 306.2 82.4 295.9 94.9C285.5 107.4 290.9 101.3 279.8 113.2C268.7 125.2 273.1 118.2 262.7 130.6C252.3 143.0 257.2 136.7 248.6 150.5C240.0 164.2 244.3 157.4 236.9 171.9C229.4 186.4 233.1 179.1 226.3 193.9C219.4 208.7 222.7 201.3 216.3 216.2C209.9 231.2 212.6 223.6 207.0 238.8C201.3 254.1 201.8 254.3 199.3 262.0"/>
<path d="M337.8 68.0C331.8 73.1 331.1 72.4 319.9 83.4C308.7 94.4 314.8 89.3 304.2 100.9C293.5 112.5 298.8 106.7 287.9 118.2C277.0 129.7 281.6 123.3 271.4 135.4C261.3 147.5 266.1 141.3 257.4 154.6C248.8 167.8 253.2 161.3 245.6 175.2C238.0 189.2 241.7 182.1 234.6 196.4C227.6 210.6 231.1 203.5 224.5 217.9C217.8 232.4 220.8 225.0 214.8 239.7C208.8 254.4 209.3 254.6 206.6 262.0"/>
<path d="M347.2 77.0C341.1 81.6 340.4 80.9 328.9 90.9C317.3 100.9 323.5 96.2 312.5 107.0C301.6 117.7 306.8 112.1 296.0 123.2C285.3 134.3 290.1 128.4 280.2 140.2C270.3 152.0 274.9 145.8 266.2 158.6C257.6 171.4 262.0 165.2 254.3 178.6C246.6 192.0 250.3 185.2 243.0 198.9C235.8 212.5 239.4 205.7 232.6 219.6C225.8 233.5 228.9 226.4 222.6 240.6C216.4 254.7 216.8 254.9 213.8 262.0"/>
<path d="M356.6 86.0C350.4 90.2 349.8 89.5 337.9 98.5C326.0 107.5 332.1 103.1 320.8 113.0C309.6 122.9 314.8 117.5 304.1 128.2C293.5 138.8 298.7 133.4 289.0 144.9C279.3 156.5 283.7 150.4 275.0 162.7C266.4 175.0 270.9 169.0 263.0 181.9C255.1 194.8 258.9 188.2 251.4 201.3C244.0 214.5 247.7 207.9 240.7 221.3C233.8 234.6 237.0 227.9 230.5 241.4C223.9 255.0 224.2 255.1 221.1 262.0"/>
<path d="M366.0 95.0C357.3 100.0 358.7 96.7 340.0 110.0C321.3 123.3 328.3 116.7 310.0 135.0C291.7 153.3 301.0 143.3 285.0 165.0C269.0 186.7 276.3 176.7 262.0 200.0C247.7 223.3 253.2 214.3 242.0 235.0C230.8 255.7 232.9 253.0 228.4 262.0"/>
<path d="M366.0 150.0C355.7 153.3 351.0 150.0 335.0 160.0C319.0 170.0 329.7 174.7 318.0 180.0C306.3 185.3 311.0 172.7 300.0 176.0C289.0 179.3 295.7 172.0 285.0 190.0C274.3 208.0 277.7 206.0 268.0 230.0C258.3 254.0 260.0 251.3 256.0 262.0"/>
<path d="M366.0 70.0C360.7 70.7 358.7 66.7 350.0 72.0C341.3 77.3 341.3 76.7 340.0 86.0C338.7 95.3 349.3 89.3 346.0 100.0C342.7 110.7 339.3 114.0 330.0 118.0C320.7 122.0 322.0 114.0 318.0 112.0"/>
<path d="M330.0 26.0C335.0 27.3 333.0 24.7 345.0 30.0C357.0 35.3 359.0 38.0 366.0 42.0"/>
<path d="M325.0 20.0C331.7 20.7 331.3 17.3 345.0 22.0C358.7 26.7 359.0 30.0 366.0 34.0"/>
<path d="M322.0 12.0C329.7 13.0 330.3 10.3 345.0 15.0C359.7 19.7 359.0 22.3 366.0 26.0"/>
<path d="M304.0 0.0C308.0 1.3 307.3 4.0 316.0 4.0C324.7 4.0 325.3 1.3 330.0 0.0"/>
<path d="M65.8 262.0C63.3 268.7 63.3 268.7 58.4 282.0C53.5 295.3 56.6 288.9 51.1 302.0C45.5 315.1 48.6 308.7 41.9 321.2C35.3 333.8 37.8 327.4 31.1 339.6C24.4 351.7 27.1 345.4 21.7 357.6C16.4 369.8 20.8 364.1 15.0 376.1C9.1 388.0 7.8 387.7 4.2 393.5"/>
<path d="M73.7 262.0C70.5 269.8 70.5 269.8 64.2 285.3C57.8 300.9 61.4 293.3 54.7 308.6C47.9 324.0 51.9 316.7 43.8 331.4C35.7 346.0 37.9 338.3 30.4 352.6C22.9 366.8 25.3 359.3 21.2 374.1C17.1 388.9 22.4 382.0 18.1 397.0C13.8 411.9 11.6 411.7 8.4 419.0"/>
<path d="M81.5 262.0C77.7 270.9 77.7 270.9 69.9 288.7C62.2 306.4 66.3 297.6 58.2 315.3C50.2 332.9 55.2 324.7 45.7 341.5C36.1 358.3 38.0 349.2 29.7 365.6C21.4 382.0 23.5 373.2 20.7 390.6C17.9 408.0 23.9 399.9 21.2 417.9C18.5 435.8 15.5 435.6 12.6 444.5"/>
<path d="M89.4 262.0C84.8 272.0 84.9 272.0 75.7 292.0C66.5 311.9 71.2 302.0 61.8 321.9C52.5 341.8 58.5 332.7 47.5 351.6C36.6 370.5 38.1 360.1 29.0 378.6C19.9 397.1 21.7 387.1 20.2 407.1C18.6 427.2 25.5 417.8 24.4 438.8C23.2 459.7 19.3 459.6 16.8 470.0"/>
<path d="M103.4 262.0C99.0 273.2 99.4 273.3 90.0 295.6C80.6 317.9 85.3 306.7 75.2 328.8C65.2 350.9 70.8 340.5 59.9 361.8C49.0 383.2 50.9 371.6 42.5 392.8C34.1 413.9 35.9 402.6 34.8 425.2C33.8 447.8 38.5 437.1 39.4 460.6C40.2 484.0 38.0 483.9 37.3 495.5"/>
<path d="M109.5 262.0C105.9 273.3 106.8 273.6 98.6 295.9C90.4 318.3 94.4 307.1 85.0 329.1C75.6 351.1 79.9 340.3 70.4 361.9C61.0 383.5 63.6 372.2 56.7 393.8C49.9 415.5 51.8 404.3 49.9 426.8C48.1 449.4 50.0 438.6 51.2 461.5C52.4 484.3 52.8 484.2 53.6 495.5"/>
<path d="M115.7 262.0C112.8 273.4 114.1 273.8 107.2 296.2C100.2 318.7 103.6 307.4 94.8 329.3C86.1 351.3 88.9 340.2 80.9 362.0C73.0 383.9 76.2 372.8 71.0 394.9C65.7 417.1 67.7 406.0 65.1 428.4C62.5 450.9 61.5 440.0 63.1 462.4C64.7 484.7 67.6 484.5 69.8 495.5"/>
<path d="M121.8 262.0C119.8 273.5 121.5 274.0 115.8 296.5C110.1 319.1 112.7 307.8 104.6 329.6C96.5 351.5 97.9 340.0 91.4 362.1C84.9 384.2 88.9 373.4 85.2 396.0C81.5 418.7 83.7 407.6 80.2 430.1C76.8 452.5 73.0 441.4 74.9 463.3C76.9 485.1 82.4 484.8 86.1 495.5"/>
<path d="M136.4 262.0C134.6 273.4 135.2 273.7 131.0 296.2C126.8 318.6 129.3 307.4 123.7 329.3C118.1 351.2 118.3 339.4 114.2 361.8C110.1 384.2 113.9 373.5 111.5 396.6C109.1 419.6 111.2 408.6 107.1 431.0C103.0 453.4 97.4 442.2 99.3 463.7C101.1 485.2 108.1 484.9 112.6 495.5"/>
<path d="M144.9 262.0C142.5 273.2 141.6 273.3 137.6 295.5C133.7 317.8 136.7 306.7 133.0 328.7C129.3 350.7 129.6 339.0 126.5 361.4C123.4 383.9 126.1 373.1 123.6 396.0C121.0 419.0 122.8 407.9 118.9 430.3C114.9 452.7 110.4 441.5 111.7 463.2C113.0 484.9 119.1 484.7 122.8 495.5"/>
<path d="M153.4 262.0C150.3 273.0 147.9 272.8 144.3 294.9C140.6 316.9 144.1 306.1 142.3 328.1C140.5 350.2 141.0 338.6 138.8 361.0C136.6 383.5 138.4 372.7 135.7 395.5C132.9 418.4 134.4 407.2 130.6 429.6C126.8 452.0 123.3 440.8 124.1 462.7C124.9 484.7 130.0 484.6 132.9 495.5"/>
<path d="M161.8 262.0C158.2 272.7 154.3 272.4 150.9 294.2C147.5 316.1 151.5 305.4 151.6 327.5C151.7 349.7 152.4 338.2 151.1 360.7C149.8 383.2 150.7 372.2 147.7 395.0C144.8 417.8 146.1 406.5 142.3 429.0C138.6 451.4 136.3 440.1 136.6 462.3C136.8 484.5 140.9 484.4 143.1 495.5"/>
<path d="M170.3 262.0C166.0 272.5 160.7 271.9 157.5 293.6C154.4 315.2 158.9 304.7 160.9 326.9C162.8 349.2 163.7 337.8 163.4 360.3C163.1 382.8 162.9 371.8 159.8 394.5C156.7 417.1 157.7 405.8 154.1 428.3C150.5 450.7 149.3 439.4 149.0 461.8C148.8 484.2 151.9 484.3 153.3 495.5"/>
<path d="M187.1 262.0C182.4 272.4 176.6 271.7 173.0 293.1C169.4 314.6 173.9 304.1 176.2 326.3C178.5 348.6 179.9 337.4 180.0 359.9C180.1 382.5 179.3 371.4 176.4 393.9C173.6 416.5 174.1 405.2 171.4 427.7C168.6 450.1 168.5 438.8 168.2 461.4C168.0 484.0 169.9 484.1 170.7 495.5"/>
<path d="M195.3 262.0C190.8 272.4 186.2 271.9 181.9 293.3C177.5 314.8 181.5 304.2 182.3 326.4C183.1 348.6 184.7 337.4 184.3 360.0C183.9 382.5 183.4 371.4 181.0 393.9C178.5 416.5 178.9 405.2 176.9 427.7C174.9 450.2 174.7 438.9 175.0 461.5C175.3 484.1 176.9 484.2 177.9 495.5"/>
<path d="M203.6 262.0C199.3 272.5 195.8 272.1 190.7 293.6C185.6 315.0 189.0 304.2 188.3 326.4C187.6 348.5 189.5 337.5 188.6 360.0C187.6 382.5 187.5 371.3 185.5 393.9C183.5 416.5 183.7 405.2 182.5 427.8C181.2 450.3 180.9 439.0 181.8 461.6C182.7 484.1 184.0 484.2 185.1 495.5"/>
<path d="M211.9 262.0C207.8 272.6 205.4 272.3 199.6 293.8C193.8 315.2 196.6 304.3 194.4 326.4C192.1 348.5 194.3 337.5 192.9 360.0C191.4 382.5 191.7 371.3 190.0 393.9C188.4 416.5 188.5 405.3 188.0 427.8C187.5 450.4 187.1 439.1 188.6 461.6C190.0 484.2 191.1 484.2 192.3 495.5"/>
<path d="M220.1 262.0C216.2 272.7 215.0 272.5 208.4 294.0C201.9 315.4 204.2 304.4 200.4 326.4C196.7 348.4 199.1 337.5 197.2 360.0C195.2 382.5 195.8 371.3 194.6 393.9C193.4 416.5 193.3 405.3 193.6 427.9C193.8 450.5 193.4 439.2 195.4 461.7C197.3 484.2 198.1 484.2 199.5 495.5"/>
<path d="M20.0 262.0C16.7 271.3 16.7 274.0 10.0 290.0C3.3 306.0 3.3 303.3 0.0 310.0"/>
<path d="M38.0 262.0C33.3 274.7 34.0 277.3 24.0 300.0C14.0 322.7 16.0 316.0 8.0 330.0C0.0 344.0 2.7 338.0 0.0 342.0"/>
<path d="M0.0 395.0C3.3 403.3 8.7 401.7 10.0 420.0C11.3 438.3 2.7 433.3 4.0 450.0C5.3 466.7 12.7 455.0 14.0 470.0C15.3 485.0 10.0 486.7 8.0 495.0"/>
<path d="M0.0 430.0C2.0 436.7 6.0 436.7 6.0 450.0C6.0 463.3 2.0 463.3 0.0 470.0"/>
<path d="M246.0 262.0C241.3 281.3 240.0 280.7 232.0 320.0C224.0 359.3 225.3 340.0 222.0 380.0C218.7 420.0 220.7 401.5 222.0 440.0C223.3 478.5 224.7 477.0 226.0 495.5"/>
<path d="M262.0 262.0C258.0 278.0 255.3 280.7 250.0 310.0C244.7 339.3 246.0 329.3 246.0 350.0C246.0 370.7 248.7 364.7 250.0 372.0"/>
<path d="M270.0 420.0C274.7 414.7 274.0 411.3 284.0 404.0C294.0 396.7 287.3 398.0 300.0 398.0C312.7 398.0 308.7 395.3 322.0 404.0C335.3 412.7 332.0 405.3 340.0 424.0C348.0 442.7 345.3 436.2 346.0 460.0C346.7 483.8 343.3 483.7 342.0 495.5"/>
<path d="M276.0 440.0C279.3 432.0 277.3 426.7 286.0 416.0C294.7 405.3 290.0 408.7 302.0 408.0C314.0 407.3 310.7 404.7 322.0 414.0C333.3 423.3 330.7 417.3 336.0 436.0C341.3 454.7 338.7 450.2 338.0 470.0C337.3 489.8 335.3 487.0 334.0 495.5"/>
<path d="M300.0 330.0C302.0 320.0 297.3 316.0 306.0 300.0C314.7 284.0 311.3 287.3 326.0 282.0C340.7 276.7 342.0 283.3 350.0 284.0"/>
<path d="M292.0 350.0C293.3 336.7 288.0 333.3 296.0 310.0C304.0 286.7 301.3 292.0 316.0 280.0C330.7 268.0 332.0 276.0 340.0 274.0"/>
<path d="M284.0 262.0C282.7 274.7 279.3 274.0 280.0 300.0C280.7 326.0 279.3 316.0 286.0 340.0C292.7 364.0 288.7 358.7 300.0 372.0C311.3 385.3 312.0 387.3 320.0 380.0C328.0 372.7 325.3 363.3 324.0 350.0C322.7 336.7 318.0 335.3 316.0 340.0C314.0 344.7 317.3 356.0 318.0 364.0"/>
<path d="M330.0 376.0C334.7 381.3 332.0 382.7 344.0 392.0C356.0 401.3 358.7 400.0 366.0 404.0"/>
<path d="M366.0 420.0C361.3 416.7 360.7 416.7 352.0 410.0C343.3 403.3 344.0 403.3 340.0 400.0"/>
<path d="M262.0 300.0C264.0 313.3 269.3 316.0 268.0 340.0C266.7 364.0 259.3 354.7 258.0 372.0C256.7 389.3 262.0 385.3 264.0 392.0"/>
<path d="M282.0 470.0C284.0 456.7 282.0 448.0 288.0 430.0C294.0 412.0 290.0 421.3 300.0 416.0C310.0 410.7 306.7 410.7 318.0 414.0C329.3 417.3 326.0 413.3 334.0 426.0C342.0 438.7 339.3 428.8 342.0 452.0C344.7 475.2 342.0 481.0 342.0 495.5"/>
<path d="M286.0 495.5C285.3 484.3 282.7 481.8 284.0 462.0C285.3 442.2 284.0 448.7 290.0 436.0C296.0 423.3 292.0 428.7 302.0 424.0C312.0 419.3 310.0 418.7 320.0 422.0C330.0 425.3 326.0 421.3 332.0 434.0C338.0 446.7 336.0 439.5 338.0 460.0C340.0 480.5 338.0 483.7 338.0 495.5"/>
<path d="M264.0 495.5C263.3 481.0 260.0 474.5 262.0 452.0C264.0 429.5 267.3 436.0 270.0 428.0"/>
<path d="M256.0 495.5C255.3 480.3 253.3 471.8 254.0 450.0C254.7 428.2 256.7 436.7 258.0 430.0"/>
</g><g stroke-width="1.5">
<path d="M0.0 39.8C9.3 41.4 12.6 40.9 27.9 44.6C43.2 48.3 35.4 51.8 45.8 50.8C56.2 49.8 51.1 48.6 59.0 41.5C66.9 34.4 63.4 38.9 69.6 29.6C75.8 20.3 74.1 23.6 77.6 13.7C81.1 3.8 79.3 4.6 80.2 0.0"/>
<path d="M0.0 4.4C2.9 9.3 -3.0 13.2 8.7 19.0C20.4 24.8 20.2 22.1 35.2 21.7C50.2 21.3 45.9 22.1 53.8 17.7C61.7 13.3 58.1 14.3 59.0 8.4C59.9 2.5 57.3 2.8 56.4 0.0"/>
<path d="M110.7 36.2C110.3 45.0 109.0 45.0 109.4 62.7C109.8 80.4 110.2 71.5 112.0 89.2C113.8 106.9 112.9 104.6 114.7 115.7C116.5 126.8 116.0 116.3 117.3 122.5C118.6 128.7 115.5 127.8 118.6 134.4C121.7 141.0 124.4 136.7 126.6 142.4C128.8 148.1 130.9 145.4 125.2 151.6C119.5 157.8 111.1 154.7 109.4 160.9C107.7 167.1 117.4 160.9 120.0 170.2C122.6 179.5 120.0 178.1 117.3 188.7C114.6 199.3 119.9 193.1 112.0 201.9C104.1 210.7 105.0 208.1 93.5 215.2C82.0 222.3 81.1 217.8 77.6 223.1C74.1 228.4 85.6 224.9 82.9 231.1C80.2 237.3 77.2 233.7 69.6 241.7C62.0 249.7 63.9 248.2 60.0 255.0C56.1 261.8 58.6 259.7 57.9 262.0"/>
<path d="M185.5 11.1C177.3 15.1 172.3 14.6 161.0 23.0C149.7 31.4 156.1 26.5 151.7 36.2C147.3 45.9 150.0 38.9 147.8 52.1C145.6 65.3 144.2 59.1 145.1 75.9C146.0 92.7 147.7 85.6 150.4 102.4C153.1 119.2 153.2 110.3 153.1 126.2C153.0 142.1 152.4 133.7 150.0 150.0C147.6 166.3 150.0 159.0 146.0 175.0C142.0 191.0 145.3 182.3 138.0 198.0C130.7 213.7 133.3 206.3 124.0 222.0C114.7 237.7 116.7 231.7 110.0 245.0C103.3 258.3 106.0 256.3 104.0 262.0"/>
<path d="M184.8 155.6C180.8 157.4 179.5 154.3 172.9 160.9C166.3 167.5 169.4 163.6 165.0 175.5C160.6 187.4 164.1 183.4 159.7 196.6C155.3 209.8 157.9 202.4 151.7 215.2C145.5 228.0 149.0 219.4 141.1 235.0C133.2 250.6 132.3 253.0 127.9 262.0"/>
<path d="M141.1 122.5C140.2 131.3 140.7 131.3 138.5 149.0C136.3 166.7 138.0 159.6 134.5 175.5C131.0 191.4 134.5 181.2 127.9 196.6C121.3 212.0 122.6 206.8 114.7 221.8C106.8 236.8 109.9 228.3 104.1 241.7C98.3 255.1 99.6 255.2 97.3 262.0"/>
<path d="M180.5 30.9C185.8 31.8 186.7 34.9 196.4 33.6C206.1 32.3 204.3 32.3 209.6 27.0C214.9 21.7 215.4 23.0 212.3 17.7C209.2 12.4 211.0 14.2 200.4 11.1C189.8 8.0 192.3 8.1 180.5 8.4C168.7 8.7 170.2 10.8 165.0 12.0"/>
<path d="M244.0 0.0C247.5 4.6 253.7 3.4 254.6 13.7C255.5 24.0 254.6 22.1 246.7 30.9C238.8 39.7 246.2 34.0 230.8 40.2C215.4 46.4 217.2 44.6 200.4 49.5C183.6 54.4 192.0 50.6 180.5 54.8C169.0 59.0 170.8 59.6 166.0 62.0"/>
<path d="M299.7 0.0C303.2 2.8 310.2 2.9 310.2 8.4C310.2 13.9 307.6 7.6 299.7 16.4C291.8 25.2 297.9 20.8 286.4 34.9C274.9 49.0 276.7 43.3 265.2 58.7C253.7 74.1 263.5 67.5 252.0 81.2C240.5 94.9 240.1 84.8 230.8 99.8C221.5 114.8 229.8 109.5 224.2 126.2C218.6 142.9 223.4 130.4 214.0 150.0C204.6 169.6 205.3 163.3 196.0 185.0C186.7 206.7 191.3 196.7 186.0 215.0C180.7 233.3 182.4 224.3 180.0 240.0C177.6 255.7 179.2 254.7 178.8 262.0"/>
<path d="M319.0 50.0C312.6 56.9 311.4 55.8 299.7 70.6C288.0 85.4 295.3 79.5 283.8 94.5C272.3 109.5 276.7 103.9 265.2 115.7C253.7 127.5 260.4 115.2 249.3 130.0C238.2 144.8 243.8 136.7 232.0 160.0C220.2 183.3 224.7 175.0 214.0 200.0C203.3 225.0 207.3 214.3 200.0 235.0C192.7 255.7 194.7 253.0 192.0 262.0"/>
<path d="M366.0 54.8C359.3 50.8 358.0 48.1 346.0 42.8C334.0 37.5 338.9 37.1 330.1 38.9C321.3 40.7 323.0 45.0 319.5 48.1"/>
<path d="M363.2 32.2C355.3 47.7 354.0 50.8 339.4 78.6C324.8 106.4 332.6 91.9 319.5 115.7C306.4 139.5 313.2 125.2 300.0 150.0C286.8 174.8 286.7 176.7 280.0 190.0"/>
<path d="M330.0 0.0C335.0 -0.7 337.7 -2.0 345.0 -2.0C352.3 -2.0 349.7 -0.7 352.0 0.0"/>
<path d="M57.9 262.0C53.9 274.7 55.8 276.5 46.0 300.0C36.2 323.5 39.9 314.2 28.6 332.5C17.3 350.8 21.5 343.2 12.0 355.0C2.5 366.8 4.0 363.7 0.0 368.0"/>
<path d="M97.3 262.0C91.4 274.5 97.3 262.3 79.5 299.4C61.7 336.5 65.1 337.6 43.9 373.2C22.7 408.8 21.0 375.8 15.9 406.3C10.8 436.8 26.9 435.1 28.6 464.8C30.3 494.5 23.5 485.3 21.0 495.5"/>
<path d="M127.9 262.0C126.2 278.7 131.3 281.0 122.8 312.1C114.3 343.2 110.9 317.2 102.4 355.4C93.9 393.6 103.2 391.9 97.3 426.7C91.4 461.5 82.9 436.8 84.6 459.7C86.3 482.6 96.5 483.6 102.4 495.5"/>
<path d="M178.8 262.0C173.7 272.8 164.4 263.2 163.5 294.3C162.6 325.4 173.7 319.8 176.2 355.4C178.7 391.0 176.2 369.0 171.1 401.2C166.0 433.4 163.4 420.7 160.9 452.1C158.4 483.5 162.6 481.0 163.5 495.5"/>
<path d="M228.4 262.0C221.2 283.0 216.5 287.0 206.7 324.9C196.9 362.8 201.6 337.6 199.1 375.8C196.6 414.0 196.6 399.5 199.1 439.4C201.6 479.3 204.2 476.8 206.7 495.5"/>
<path d="M250.0 380.8C248.3 389.3 249.1 391.0 244.9 406.3C240.7 421.6 236.4 397.0 237.3 426.7C238.2 456.4 244.1 472.6 247.5 495.5"/>
<path d="M250.0 390.0C254.0 394.0 250.3 400.0 262.0 402.0C273.7 404.0 273.3 401.3 285.0 396.0C296.7 390.7 289.3 386.0 297.0 386.0C304.7 386.0 297.0 390.7 308.0 396.0C319.0 401.3 316.7 394.0 330.0 402.0C343.3 410.0 339.3 404.0 348.0 420.0C356.7 436.0 352.0 424.8 356.0 450.0C360.0 475.2 358.7 480.3 360.0 495.5"/>
<path d="M310.0 304.0C314.0 300.0 310.7 297.3 322.0 292.0C333.3 286.7 334.7 288.0 344.0 288.0C353.3 288.0 354.7 288.7 350.0 292.0C345.3 295.3 341.3 292.7 330.0 298.0C318.7 303.3 320.7 304.7 316.0 308.0"/>
</g></g>
<g transform="translate(25 27.5) rotate(3)"><rect x="-5.5" y="-2.6" width="11" height="5.2" rx="1.6" fill="#141414"/><text x="0" y="1.7" font-size="4.6" font-weight="bold" fill="#f4f4f4" text-anchor="middle" font-family="Liberation Sans">1246</text></g>
<g transform="translate(20 35) rotate(3)"><rect x="-5.5" y="-2.6" width="11" height="5.2" rx="1.6" fill="#141414"/><text x="0" y="1.7" font-size="4.6" font-weight="bold" fill="#f4f4f4" text-anchor="middle" font-family="Liberation Sans">1242</text></g>
<g transform="translate(51 32.5) rotate(-3)"><rect x="-5.5" y="-2.6" width="11" height="5.2" rx="1.6" fill="#141414"/><text x="0" y="1.7" font-size="4.6" font-weight="bold" fill="#f4f4f4" text-anchor="middle" font-family="Liberation Sans">1244</text></g>
<g transform="translate(2 38.5) rotate(10)"><rect x="-2.5" y="-2.6" width="5" height="5.2" rx="1.6" fill="#141414"/><text x="0" y="1.7" font-size="4.6" font-weight="bold" fill="#f4f4f4" text-anchor="middle" font-family="Liberation Sans">40</text></g>
<g transform="translate(161 36.5) rotate(-5)"><rect x="-5.5" y="-2.6" width="11" height="5.2" rx="1.6" fill="#141414"/><text x="0" y="1.7" font-size="4.6" font-weight="bold" fill="#f4f4f4" text-anchor="middle" font-family="Liberation Sans">1230</text></g>
<g transform="translate(161.5 45) rotate(-5)"><rect x="-5.5" y="-2.6" width="11" height="5.2" rx="1.6" fill="#141414"/><text x="0" y="1.7" font-size="4.6" font-weight="bold" fill="#f4f4f4" text-anchor="middle" font-family="Liberation Sans">1226</text></g>
<g transform="translate(139.5 53) rotate(-65)"><rect x="-5.5" y="-2.6" width="11" height="5.2" rx="1.6" fill="#141414"/><text x="0" y="1.7" font-size="4.6" font-weight="bold" fill="#f4f4f4" text-anchor="middle" font-family="Liberation Sans">1232</text></g>
<g transform="translate(153.5 60) rotate(-65)"><rect x="-5.5" y="-2.6" width="11" height="5.2" rx="1.6" fill="#141414"/><text x="0" y="1.7" font-size="4.6" font-weight="bold" fill="#f4f4f4" text-anchor="middle" font-family="Liberation Sans">1222</text></g>
<g transform="translate(110.7 65) rotate(-85)"><rect x="-5.5" y="-2.6" width="11" height="5.2" rx="1.6" fill="#141414"/><text x="0" y="1.7" font-size="4.6" font-weight="bold" fill="#f4f4f4" text-anchor="middle" font-family="Liberation Sans">1238</text></g>
<g transform="translate(148.5 112) rotate(-80)"><rect x="-5.5" y="-2.6" width="11" height="5.2" rx="1.6" fill="#141414"/><text x="0" y="1.7" font-size="4.6" font-weight="bold" fill="#f4f4f4" text-anchor="middle" font-family="Liberation Sans">1220</text></g>
<g transform="translate(157 123) rotate(-90)"><rect x="-5.5" y="-2.6" width="11" height="5.2" rx="1.6" fill="#141414"/><text x="0" y="1.7" font-size="4.6" font-weight="bold" fill="#f4f4f4" text-anchor="middle" font-family="Liberation Sans">1216</text></g>
<g transform="translate(117 127) rotate(-65)"><rect x="-5.5" y="-2.6" width="11" height="5.2" rx="1.6" fill="#141414"/><text x="0" y="1.7" font-size="4.6" font-weight="bold" fill="#f4f4f4" text-anchor="middle" font-family="Liberation Sans">1234</text></g>
<g transform="translate(182 156) rotate(-20)"><rect x="-5.5" y="-2.6" width="11" height="5.2" rx="1.6" fill="#141414"/><text x="0" y="1.7" font-size="4.6" font-weight="bold" fill="#f4f4f4" text-anchor="middle" font-family="Liberation Sans">1210</text></g>
<g transform="translate(192 170) rotate(-25)"><rect x="-5.5" y="-2.6" width="11" height="5.2" rx="1.6" fill="#141414"/><text x="0" y="1.7" font-size="4.6" font-weight="bold" fill="#f4f4f4" text-anchor="middle" font-family="Liberation Sans">1208</text></g>
<g transform="translate(199 176) rotate(-70)"><rect x="-5.5" y="-2.6" width="11" height="5.2" rx="1.6" fill="#141414"/><text x="0" y="1.7" font-size="4.6" font-weight="bold" fill="#f4f4f4" text-anchor="middle" font-family="Liberation Sans">1206</text></g>
<g transform="translate(204 180) rotate(-70)"><rect x="-5.5" y="-2.6" width="11" height="5.2" rx="1.6" fill="#141414"/><text x="0" y="1.7" font-size="4.6" font-weight="bold" fill="#f4f4f4" text-anchor="middle" font-family="Liberation Sans">1204</text></g>
<g transform="translate(213 188) rotate(-70)"><rect x="-5.5" y="-2.6" width="11" height="5.2" rx="1.6" fill="#141414"/><text x="0" y="1.7" font-size="4.6" font-weight="bold" fill="#f4f4f4" text-anchor="middle" font-family="Liberation Sans">1200</text></g>
<g transform="translate(216 200) rotate(-75)"><rect x="-5.5" y="-2.6" width="11" height="5.2" rx="1.6" fill="#141414"/><text x="0" y="1.7" font-size="4.6" font-weight="bold" fill="#f4f4f4" text-anchor="middle" font-family="Liberation Sans">1194</text></g>
<g transform="translate(233 222) rotate(-55)"><rect x="-5.5" y="-2.6" width="11" height="5.2" rx="1.6" fill="#141414"/><text x="0" y="1.7" font-size="4.6" font-weight="bold" fill="#f4f4f4" text-anchor="middle" font-family="Liberation Sans">1192</text></g>
<g transform="translate(239 228) rotate(-70)"><rect x="-5.5" y="-2.6" width="11" height="5.2" rx="1.6" fill="#141414"/><text x="0" y="1.7" font-size="4.6" font-weight="bold" fill="#f4f4f4" text-anchor="middle" font-family="Liberation Sans">1190</text></g>
<g transform="translate(288 89) rotate(-60)"><rect x="-5.5" y="-2.6" width="11" height="5.2" rx="1.6" fill="#141414"/><text x="0" y="1.7" font-size="4.6" font-weight="bold" fill="#f4f4f4" text-anchor="middle" font-family="Liberation Sans">1200</text></g>
<g transform="translate(355 59) rotate(-8)"><rect x="-5.5" y="-2.6" width="11" height="5.2" rx="1.6" fill="#141414"/><text x="0" y="1.7" font-size="4.6" font-weight="bold" fill="#f4f4f4" text-anchor="middle" font-family="Liberation Sans">1192</text></g>
<g transform="translate(339 105) rotate(-5)"><rect x="-5.5" y="-2.6" width="11" height="5.2" rx="1.6" fill="#141414"/><text x="0" y="1.7" font-size="4.6" font-weight="bold" fill="#f4f4f4" text-anchor="middle" font-family="Liberation Sans">1190</text></g>
<g transform="translate(311 173) rotate(5)"><rect x="-5.5" y="-2.6" width="11" height="5.2" rx="1.6" fill="#141414"/><text x="0" y="1.7" font-size="4.6" font-weight="bold" fill="#f4f4f4" text-anchor="middle" font-family="Liberation Sans">1188</text></g>
<g transform="translate(163.5 307) rotate(-88)"><rect x="-5.5" y="-2.6" width="11" height="5.2" rx="1.6" fill="#141414"/><text x="0" y="1.7" font-size="4.6" font-weight="bold" fill="#f4f4f4" text-anchor="middle" font-family="Liberation Sans">1200</text></g>
<g transform="translate(87.6 441) rotate(-80)"><rect x="-5.5" y="-2.6" width="11" height="5.2" rx="1.6" fill="#141414"/><text x="0" y="1.7" font-size="4.6" font-weight="bold" fill="#f4f4f4" text-anchor="middle" font-family="Liberation Sans">1210</text></g>
<g transform="translate(109.3 440) rotate(-85)"><rect x="-5.5" y="-2.6" width="11" height="5.2" rx="1.6" fill="#141414"/><text x="0" y="1.7" font-size="4.6" font-weight="bold" fill="#f4f4f4" text-anchor="middle" font-family="Liberation Sans">1208</text></g>
<g transform="translate(128.4 440) rotate(-87)"><rect x="-5.5" y="-2.6" width="11" height="5.2" rx="1.6" fill="#141414"/><text x="0" y="1.7" font-size="4.6" font-weight="bold" fill="#f4f4f4" text-anchor="middle" font-family="Liberation Sans">1206</text></g>
<g transform="translate(141.8 440) rotate(-85)"><rect x="-5.5" y="-2.6" width="11" height="5.2" rx="1.6" fill="#141414"/><text x="0" y="1.7" font-size="4.6" font-weight="bold" fill="#f4f4f4" text-anchor="middle" font-family="Liberation Sans">1204</text></g>
<g transform="translate(155.3 440) rotate(-85)"><rect x="-5.5" y="-2.6" width="11" height="5.2" rx="1.6" fill="#141414"/><text x="0" y="1.7" font-size="4.6" font-weight="bold" fill="#f4f4f4" text-anchor="middle" font-family="Liberation Sans">1202</text></g>
<g transform="translate(163.5 440) rotate(-90)"><rect x="-5.5" y="-2.6" width="11" height="5.2" rx="1.6" fill="#141414"/><text x="0" y="1.7" font-size="4.6" font-weight="bold" fill="#f4f4f4" text-anchor="middle" font-family="Liberation Sans">1200</text></g>
<g transform="translate(175.4 440) rotate(-88)"><rect x="-5.5" y="-2.6" width="11" height="5.2" rx="1.6" fill="#141414"/><text x="0" y="1.7" font-size="4.6" font-weight="bold" fill="#f4f4f4" text-anchor="middle" font-family="Liberation Sans">1198</text></g>
<g transform="translate(184.4 440) rotate(-85)"><rect x="-5.5" y="-2.6" width="11" height="5.2" rx="1.6" fill="#141414"/><text x="0" y="1.7" font-size="4.6" font-weight="bold" fill="#f4f4f4" text-anchor="middle" font-family="Liberation Sans">1196</text></g>
<g transform="translate(189 441) rotate(-85)"><rect x="-5.5" y="-2.6" width="11" height="5.2" rx="1.6" fill="#141414"/><text x="0" y="1.7" font-size="4.6" font-weight="bold" fill="#f4f4f4" text-anchor="middle" font-family="Liberation Sans">1194</text></g>
<g transform="translate(193.5 441) rotate(-85)"><rect x="-5.5" y="-2.6" width="11" height="5.2" rx="1.6" fill="#141414"/><text x="0" y="1.7" font-size="4.6" font-weight="bold" fill="#f4f4f4" text-anchor="middle" font-family="Liberation Sans">1192</text></g>
<g transform="translate(200.4 440) rotate(-88)"><rect x="-5.5" y="-2.6" width="11" height="5.2" rx="1.6" fill="#141414"/><text x="0" y="1.7" font-size="4.6" font-weight="bold" fill="#f4f4f4" text-anchor="middle" font-family="Liberation Sans">1190</text></g>
<g transform="translate(217.7 444) rotate(-88)"><rect x="-5.5" y="-2.6" width="11" height="5.2" rx="1.6" fill="#141414"/><text x="0" y="1.7" font-size="4.6" font-weight="bold" fill="#f4f4f4" text-anchor="middle" font-family="Liberation Sans">1188</text></g>
<g transform="translate(225.3 471) rotate(-85)"><rect x="-5.5" y="-2.6" width="11" height="5.2" rx="1.6" fill="#141414"/><text x="0" y="1.7" font-size="4.6" font-weight="bold" fill="#f4f4f4" text-anchor="middle" font-family="Liberation Sans">1186</text></g>
<g transform="translate(230.2 485) rotate(-85)"><rect x="-5.5" y="-2.6" width="11" height="5.2" rx="1.6" fill="#141414"/><text x="0" y="1.7" font-size="4.6" font-weight="bold" fill="#f4f4f4" text-anchor="middle" font-family="Liberation Sans">1184</text></g>
<g transform="translate(244.9 475) rotate(-88)"><rect x="-5.5" y="-2.6" width="11" height="5.2" rx="1.6" fill="#141414"/><text x="0" y="1.7" font-size="4.6" font-weight="bold" fill="#f4f4f4" text-anchor="middle" font-family="Liberation Sans">1180</text></g>
<g transform="translate(350.5 472) rotate(-80)"><rect x="-5.5" y="-2.6" width="11" height="5.2" rx="1.6" fill="#141414"/><text x="0" y="1.7" font-size="4.6" font-weight="bold" fill="#f4f4f4" text-anchor="middle" font-family="Liberation Sans">1178</text></g>
<g transform="translate(339.1 389.2) rotate(15)"><rect x="-5.5" y="-2.6" width="11" height="5.2" rx="1.6" fill="#141414"/><text x="0" y="1.7" font-size="4.6" font-weight="bold" fill="#f4f4f4" text-anchor="middle" font-family="Liberation Sans">1186</text></g>
<g transform="translate(99 15) rotate(-90)"><rect x="-10" y="-2.2" width="20" height="4.4" rx="1.5" fill="#c9d0d8" stroke="#6d7a88" stroke-width=".5"/><text x="0" y="1.4" font-size="3.6" fill="#5a6672" text-anchor="middle" font-family="Liberation Sans">S 232nd Cir</text></g>
<g transform="translate(59 70.6) rotate(-55)"><rect x="-22" y="-2.3" width="44" height="4.6" rx="1.6" fill="#cdd3da" stroke="#6d7a88" stroke-width=".5" opacity=".9"/><text x="0" y="1.4" font-size="3.8" fill="#5a6672" text-anchor="middle" font-family="Liberation Sans">Prairie Ridge Rd/Ridge Rd</text></g>
<path d="M84 104L88 106V109.5L84 111.5L80 109.5V106Z" fill="#1a1a1a" stroke="#d8c05a" stroke-width=".5"/>
<text x="73" y="452" font-size="4" fill="#7a86a8" font-family="Liberation Sans" opacity=".8">PRAIRIE RIDGE</text>
<text x="2" y="494" font-size="3" fill="#555" font-family="Liberation Sans" opacity=".7">Sarpy Co., Esri, Inc.; Sarpy County, Nebraska; Esri, Inc. | City of Papillion, Sarpy | Sarpy County, NE</text>
</g>
</defs>
<g clip-path="url(#cpCanvas)">
<rect x="407" y="256" width="391" height="603.6" fill="#fff"/>
<rect x="416.9" y="265.2" width="371.2" height="584.6" fill="#fdfdfd" stroke="#8d8d8d" stroke-width="1.6"/>
<rect x="418.3" y="266.6" width="368.4" height="581.8" fill="none" stroke="#c9c9c9" stroke-width="1.2"/>
<rect x="419" y="267.5" width="367" height="17.5" fill="#fff"/>
<path d="M419 286.3H786" stroke="#b5b5b5" stroke-width="1.4"/>
<path d="M491.5 268.5V284.5" stroke="#e0e0e0" stroke-width="1"/>
<text x="495.5" y="278.6" font-size="9.2" fill="#c4c4c4" font-family="Liberation Sans">Map Title</text>
<text x="460" y="275.3" font-size="4.3" fill="#3b82d0" font-family="Liberation Serif" font-weight="bold" text-anchor="middle">SARPY COUNTY</text>
<text x="461.5" y="280.8" font-size="4.3" fill="#3b82d0" font-family="Liberation Serif" font-weight="bold" text-anchor="middle">NEBRASKA</text>
<path d="M422.5 275.2H437M429.5 273.4C431 271.8 434.6 271.6 436.6 272.8" stroke="#7a78c8" stroke-width=".7" fill="none"/><text x="425.5" y="281" font-size="5" font-weight="bold" fill="#1a1a1a" font-family="Liberation Sans">GIS</text>
<g transform="translate(420 288)" clip-path="url(#cpPlan)"><g filter="url(#tone)"><use href="#aerial"/></g><rect x="0" y="0" width="365.3" height="495.1" filter="url(#grain)" opacity=".55"/></g>
<rect x="419.5" y="287.5" width="319" height="255" fill="none" stroke="#fff" stroke-width="1.1"/>
<rect x="418.8" y="784.6" width="265.4" height="38.6" fill="#fff" stroke="#9a9a9a" stroke-width="1.1"/>
<text x="420.5" y="791.4" font-size="5.4" fill="#444" font-family="Liberation Sans">Notes</text>
<rect x="418.8" y="825.4" width="265.4" height="23.4" fill="#fff" stroke="#9a9a9a" stroke-width="1.1"/>
<g fill="#111"><rect x="423" y="834.4" width="23" height="2.8"/><rect x="469.4" y="834.4" width="46.8" height="2.8"/><rect x="562.6" y="834.4" width="46.6" height="2.8"/></g><rect x="423" y="834.4" width="186.2" height="2.8" fill="none" stroke="#111" stroke-width=".5"/>
<g font-size="3.4" fill="#666" font-family="Liberation Sans"><text x="422" y="831.5">0</text><text x="512.5" y="831.5">100</text><text x="606" y="831.5">200</text><text x="613" y="837">m</text></g>
<g font-size="2.7" fill="#555" font-family="Liberation Sans"><text x="420.5" y="842.6" textLength="243">This product is for informational purposes and may not have been prepared for, or be suitable for legal, engineering, or surveying purposes. Users of this information should</text><text x="420.5" y="846.6" textLength="147">review or consult the source records and information sources to ascertain the usability of the information.</text></g>
<path d="M676.4 830.6L680.4 843L676.4 840.2L672.4 843Z" fill="#444"/><path d="M676.4 830.6V840.2L672.4 843Z" fill="#bbb"/>
<g clip-path="url(#cpOv)"><rect x="686.3" y="784.4" width="98.8" height="64" fill="#a08868"/>
<g filter="url(#bl2)"><ellipse cx="705" cy="800" rx="14" ry="9" fill="#6a5640"/><ellipse cx="740" cy="815" rx="18" ry="8" fill="#78624a"/><ellipse cx="770" cy="835" rx="11" ry="8" fill="#6a5640"/><ellipse cx="760" cy="795" rx="14" ry="8" fill="#b49a78"/><ellipse cx="700" cy="838" rx="10" ry="6" fill="#b09472"/><ellipse cx="722" cy="830" rx="9" ry="7" fill="#84694c"/><ellipse cx="778" cy="806" rx="6" ry="10" fill="#8a7450"/></g>
<g fill="none" stroke="#2a2018" stroke-width=".6" opacity=".75"><path d="M683.2 805.8Q683.2 805.8 691.4 802.9Q699.6 800.1 707.2 799.3Q714.8 798.5 721.4 797.9Q728.0 797.4 733.4 798.3Q738.7 799.2 749.0 797.1Q759.2 795.1 763.4 796.6Q767.7 798.2 777.8 797.3"/><path d="M687.5 806.5Q687.5 806.5 693.8 809.3Q700.1 812.1 707.7 813.1Q715.4 814.2 722.8 813.0Q730.2 811.9 736.6 813.3Q743.1 814.6 747.9 817.9Q752.7 821.2 761.7 821.8Q770.7 822.3 777.3 822.9"/><path d="M685.8 830.4Q685.8 830.4 689.8 832.7Q693.8 835.1 698.2 832.8Q702.6 830.6 709.3 830.8Q716.1 830.9 720.7 832.1Q725.3 833.2 728.5 832.7Q731.7 832.3 736.9 831.4Q742.2 830.6 750.5 830.9Q758.8 831.3 763.8 829.7Q768.8 828.1 771.8 831.2Q774.8 834.4 780.8 832.3"/><path d="M683.1 803.4Q683.1 803.4 688.9 806.1Q694.6 808.8 698.6 808.9Q702.5 809.1 708.4 808.4Q714.4 807.7 720.9 807.1Q727.4 806.5 732.4 808.5Q737.4 810.4 740.6 810.7Q743.8 810.9 748.7 809.4Q753.6 807.9 759.1 806.2Q764.5 804.4 768.5 806.7Q772.4 809.1 777.7 809.9"/><path d="M687.4 819.2Q687.4 819.2 693.5 818.7Q699.6 818.1 702.0 815.6Q704.4 813.2 709.6 814.8Q714.8 816.4 722.4 812.7Q729.9 808.9 731.3 808.8Q732.6 808.7 737.7 809.4Q742.8 810.1 749.3 808.6Q755.7 807.1 757.9 807.4Q760.1 807.6 766.6 807.8Q773.1 808.0 780.6 808.1"/><path d="M686.6 820.3Q686.6 820.3 695.8 819.6Q704.9 819.0 710.1 818.0Q715.2 817.0 721.4 817.6Q727.6 818.2 734.6 817.1Q741.5 816.0 751.1 817.4Q760.6 818.7 763.6 819.7Q766.6 820.7 773.5 820.7"/><path d="M682.7 821.6Q682.7 821.6 689.8 818.9Q696.8 816.2 699.6 817.6Q702.4 819.1 707.3 818.7Q712.2 818.2 718.8 822.7Q725.4 827.2 728.1 825.5Q730.8 823.8 733.5 822.6Q736.2 821.5 741.7 822.8Q747.3 824.1 753.9 824.2Q760.5 824.3 761.3 828.4Q762.1 832.5 768.8 829.5Q775.4 826.4 779.9 826.5"/><path d="M688.8 815.5Q688.8 815.5 694.2 816.1Q699.7 816.6 708.4 819.2Q717.2 821.8 724.1 821.9Q731.1 821.9 735.5 825.0Q739.9 828.1 750.3 829.3Q760.7 830.4 766.8 831.2Q772.9 832.0 779.5 830.3"/><path d="M691.4 819.7Q691.4 819.7 696.0 816.7Q700.6 813.7 708.1 814.1Q715.7 814.5 723.5 815.9Q731.3 817.3 736.2 818.2Q741.1 819.0 746.8 814.8Q752.5 810.6 761.2 811.4Q769.9 812.1 776.9 814.8"/><path d="M689.7 818.9Q689.7 818.9 694.5 821.8Q699.2 824.8 705.2 823.3Q711.1 821.8 715.1 818.4Q719.1 815.1 725.9 815.0Q732.7 814.9 738.2 817.0Q743.6 819.1 747.2 815.8Q750.7 812.4 758.6 813.1Q766.5 813.8 768.4 810.3Q770.3 806.9 775.6 809.6"/><path d="M691.3 835.8Q691.3 835.8 692.9 834.9Q694.5 833.9 697.9 831.1Q701.3 828.2 709.5 830.6Q717.7 833.0 720.1 833.9Q722.5 834.7 726.5 834.0Q730.5 833.2 736.7 829.8Q742.8 826.4 744.7 826.3Q746.5 826.2 750.9 827.1Q755.2 828.0 759.7 826.8Q764.2 825.6 768.0 827.3Q771.9 829.1 777.3 826.6"/><path d="M689.9 824.4Q689.9 824.4 691.7 821.7Q693.4 819.0 699.9 822.8Q706.5 826.6 712.5 826.0Q718.6 825.4 723.4 823.9Q728.3 822.4 730.3 825.1Q732.3 827.7 737.0 825.8Q741.8 823.8 749.2 826.5Q756.5 829.2 760.5 830.9Q764.4 832.5 771.1 829.9Q777.7 827.2 779.5 827.7"/><path d="M689.3 795.6Q689.3 795.6 694.8 794.1Q700.3 792.7 707.6 792.1Q714.8 791.6 722.5 791.2Q730.3 790.9 736.5 790.9Q742.7 790.9 751.5 791.8Q760.3 792.7 766.9 793.7Q773.5 794.7 777.7 792.9"/><path d="M686.2 841.6Q686.2 841.6 691.9 843.1Q697.5 844.6 704.0 842.7Q710.6 840.9 716.1 840.7Q721.6 840.5 729.8 844.4Q738.0 848.3 743.5 845.9Q748.9 843.5 753.2 842.7Q757.5 841.9 764.6 844.8Q771.6 847.8 776.0 848.6"/><path d="M702.4 786.7Q702.4 786.7 705.9 789.9Q709.3 793.1 707.4 797.3Q705.5 801.6 704.5 806.0Q703.5 810.5 704.9 815.3Q706.2 820.1 708.1 824.2Q709.9 828.4 709.5 832.4Q709.1 836.5 711.2 840.2"/><path d="M775.7 781.7Q775.7 781.7 772.7 789.4Q769.7 797.1 768.7 800.9Q767.8 804.8 769.8 809.6Q771.7 814.4 770.6 819.2Q769.4 824.0 767.8 826.8Q766.1 829.6 766.0 833.8Q765.8 838.1 764.5 841.7"/><path d="M765.1 783.2Q765.1 783.2 760.9 786.9Q756.7 790.6 757.0 797.1Q757.3 803.6 756.5 806.6Q755.7 809.7 754.6 813.1Q753.5 816.5 756.3 822.6Q759.1 828.6 758.1 833.9Q757.1 839.1 753.0 843.9"/><path d="M772.5 782.4Q772.5 782.4 776.2 788.7Q779.9 794.9 779.3 797.6Q778.7 800.4 779.4 806.7Q780.0 812.9 780.3 817.9Q780.6 822.9 784.5 824.2Q788.4 825.6 785.5 831.9Q782.6 838.2 787.5 842.7"/><path d="M713.4 786.2Q713.4 786.2 713.3 790.2Q713.1 794.2 714.0 800.4Q714.8 806.5 712.3 807.9Q709.9 809.3 709.5 813.7Q709.0 818.0 711.5 824.6Q714.0 831.1 710.9 836.6Q707.9 842.1 711.1 845.9"/><path d="M694.3 784.4Q694.3 784.4 691.3 789.8Q688.3 795.2 689.8 799.0Q691.4 802.8 694.0 807.6Q696.7 812.4 695.8 814.6Q695.0 816.8 693.2 822.1Q691.5 827.4 691.0 832.2Q690.5 837.1 692.1 844.0"/></g>
<g fill="none" stroke="#120e0a" stroke-width="1.2"><path d="M685.9 786.4Q685.9 786.4 693.2 789.3Q700.6 792.3 700.4 794.8Q700.2 797.4 703.6 798.9Q707.0 800.3 714.4 802.0Q721.9 803.6 726.6 804.5Q731.3 805.4 735.6 807.6Q739.8 809.7 742.4 813.1Q745.0 816.4 747.3 819.6Q749.6 822.9 752.3 826.7Q755.0 830.5 763.6 827.5Q772.2 824.5 776.5 830.1Q780.7 835.7 782.9 837.5"/><path d="M692.2 817.9Q692.2 817.9 693.9 820.1Q695.6 822.3 698.8 824.9Q702.0 827.5 708.7 827.5Q715.5 827.5 717.9 830.0Q720.4 832.5 724.7 835.1Q728.9 837.7 734.1 837.5Q739.2 837.4 743.4 836.1Q747.6 834.9 750.8 840.4Q754.1 845.9 758.1 848.2"/><path d="M701.4 781.9Q701.4 781.9 700.6 788.3Q699.8 794.7 706.5 797.1Q713.3 799.4 712.9 801.5Q712.5 803.5 712.5 809.6Q712.5 815.6 715.8 818.0Q719.1 820.3 722.3 823.0"/><path d="M774 838L780 824L784 840Z" stroke-width="1.5"/><path d="M697 840L705 835" stroke-width="2.2"/></g>
<g fill="none" stroke="#d8d2cc" stroke-width=".7" opacity=".7"><path d="M732 784V848M756 784V826M766 784V848M686 806H785M686 826H745M775 818V848M748 806V826M712 826V848M700 806V826"/></g>
<path d="M779 795L781.5 801H776.5ZM779 804L781.5 810H776.5Z" fill="#4a5a30"/>
<rect x="729.6" y="808.4" width="12.4" height="17" fill="#7aa8dc" fill-opacity=".5" stroke="#4f8ad0" stroke-width=".8"/>
</g>
<rect x="686.3" y="784.4" width="98.8" height="64" filter="url(#grain)" opacity=".5"/>
<rect x="686.3" y="784.4" width="98.8" height="64" fill="none" stroke="#888" stroke-width=".8"/>
<g fill="none" stroke="#b2b2b2" stroke-width="1" stroke-dasharray="15 4 3 3 3 4" ><path d="M276 163.5H1034"/><path d="M276 349.5H1034"/><path d="M276 534.5H1034"/><path d="M276 720.5H1034"/><path d="M276 905.5H1034"/><path d="M393.5 139.6V954"/><path d="M579.5 139.6V954"/><path d="M765.5 139.6V954"/><path d="M950.5 139.6V954"/></g>
<g clip-path="url(#cpPage)"><g fill="none" stroke="#707070" stroke-width="1" stroke-dasharray="15 4 3 3 3 4" stroke-width="1"><path d="M276 163.5H1034"/><path d="M276 349.5H1034"/><path d="M276 534.5H1034"/><path d="M276 720.5H1034"/><path d="M276 905.5H1034"/><path d="M393.5 139.6V954"/><path d="M579.5 139.6V954"/><path d="M765.5 139.6V954"/><path d="M950.5 139.6V954"/></g></g>
<g clip-path="url(#cpPhoto)"><g fill="none" stroke="#86a0c4" stroke-width="1" stroke-dasharray="15 4 3 3 3 4" stroke-width="1" opacity=".55"><path d="M276 163.5H1034"/><path d="M276 349.5H1034"/><path d="M276 534.5H1034"/><path d="M276 720.5H1034"/><path d="M276 905.5H1034"/><path d="M393.5 139.6V954"/><path d="M579.5 139.6V954"/><path d="M765.5 139.6V954"/><path d="M950.5 139.6V954"/></g></g>
<g font-family="Liberation Sans" font-size="18.5" fill="#ababab">
<text x="281" y="159.7" letter-spacing="0.15">400</text>
<text x="281" y="344.9" letter-spacing="0.15">200</text>
<text x="281" y="530" letter-spacing="0.15">0</text>
<text x="281" y="715.7" letter-spacing="0.8">-200</text>
<text x="281" y="900.8" letter-spacing="0.8">-400</text>
<text transform="translate(387.9 947) rotate(-90)" letter-spacing="0.8">-200</text>
<text transform="translate(573.9 947) rotate(-90)" letter-spacing="0.15">0</text>
<text transform="translate(759.9 947) rotate(-90)" letter-spacing="0.15">200</text>
<text transform="translate(944.9 947) rotate(-90)" letter-spacing="0.15">400</text>
</g>
<text x="335" y="880.7" font-size="20" fill="#fff" font-family="Liberation Sans">50 m</text><path d="M336.5 885.5V893.7H382.5V885.5" fill="none" stroke="#fff" stroke-width="1"/>
</g>
</svg><svg style="left:0;top:0" width="1783" height="982" viewBox="0 0 1783 982">
<g transform="translate(1172.3 377.3) scale(1.1599 1.1587)" clip-path="url(#cpSheet)"><g filter="url(#tone)"><use href="#aerial"/></g></g>
<rect x="1172.3" y="377.3" width="370" height="295" filter="url(#grain)" opacity=".55"/>
<rect x="1172.3" y="377.3" width="370" height="295" fill="none" stroke="#fff" stroke-width="1.2"/>
<g fill="none" stroke="#9c9c9c" stroke-width="1">
<rect x="1109.5" y="322.5" width="572" height="404.5"/>
<rect x="1147.5" y="342.8" width="515" height="365.7"/>
<path d="M1565.5 342.8V587.2"/>
</g>
<g fill="none" stroke="#ff1010" stroke-width="1.2"><path d="M1128.5 322.5H1109.5V341.5M1662.5 322.5H1681.5V341.5M1109.5 708.5V727H1129M1681.5 708V727H1662.5"/></g>
<g fill="none" stroke="#f4f4f4" stroke-width="1">
<rect x="1565.5" y="587.5" width="97" height="121"/>
<path d="M1565.5 597.5H1662.5M1565.5 609.5H1662.5M1565.5 626.5H1662.5M1565.5 656H1662.5M1565.5 664H1662.5M1565.5 673.5H1662.5M1565.5 685.5H1662.5M1565.5 696H1662.5"/>
<path d="M1573.5 587.5V597.5M1581 587.5V597.5M1629.5 587.5V597.5M1648.5 587.5V597.5M1590 656V673.5M1618.2 656V664M1597.5 696V708.5M1650.3 696V708.5"/>
<path d="M1565.5 592.3H1581" />
</g>
<g fill="#f0f0f0"><rect x="1594" y="594" width="23" height="3"/><rect x="1636" y="594.5" width="6" height="2.5"/><rect x="1652.5" y="594.5" width="5" height="2.5"/><rect x="1567" y="594.5" width="4" height="2.5"/><rect x="1575" y="594.5" width="5" height="2.5"/><rect x="1566" y="656.5" width="19" height="2"/><rect x="1591" y="656.5" width="11" height="2"/><rect x="1619" y="656.5" width="13" height="2"/><rect x="1566" y="664.5" width="6" height="2"/><rect x="1591" y="664.5" width="14" height="2"/><rect x="1566" y="674" width="21" height="2"/><rect x="1566" y="686" width="17" height="2"/><rect x="1566" y="696.5" width="7" height="2"/><rect x="1598" y="696.5" width="16" height="2"/><rect x="1651" y="696.5" width="5" height="2"/></g>
<g fill="#7e7e7e"><rect x="1570" y="667.5" width="15" height="3"/><rect x="1608" y="688" width="12" height="2.6"/><rect x="1608" y="692" width="12" height="2.6"/><rect x="1576" y="701" width="11" height="3"/><rect x="1616" y="701" width="16" height="3"/><rect x="1655" y="700.5" width="3" height="3.5"/><rect x="1576" y="659.6" width="3" height="3"/><rect x="1603" y="659" width="2" height="4"/><rect x="1639" y="659.4" width="3" height="3.4"/><rect x="1625" y="667.5" width="2" height="3"/></g>
<text x="1614.2" y="606" font-size="6" fill="#8a8a8a" text-anchor="middle" font-family="Liberation Sans" textLength="55">QUANTITY MODEL</text>
<text x="1614.5" y="618.5" font-size="5" fill="#8a8a8a" text-anchor="middle" font-family="Liberation Sans">&gt;</text>
<text x="1614" y="681.8" font-size="6.2" fill="#8a8a8a" text-anchor="middle" font-family="Liberation Sans" textLength="78">Specific_Drawing_Desc</text>
<rect x="1568" y="634" width="44" height="14" fill="#fff"/>
<text x="1578.5" y="645" font-size="10" font-weight="bold" fill="#0b4a96" font-family="Liberation Sans" textLength="32" lengthAdjust="spacingAndGlyphs">Trimble</text>
<g fill="none" stroke="#0b4a96" stroke-width=".9"><circle cx="1573" cy="641.2" r="3"/><path d="M1568.6 641.2H1577.4M1570.2 637.6L1575.8 644.8M1575.8 637.6L1570.2 644.8"/></g>
<rect x="1386.5" y="472" width="10" height="10" fill="none" stroke="#7a7aff" stroke-width="1"/>
</svg></body></html>
